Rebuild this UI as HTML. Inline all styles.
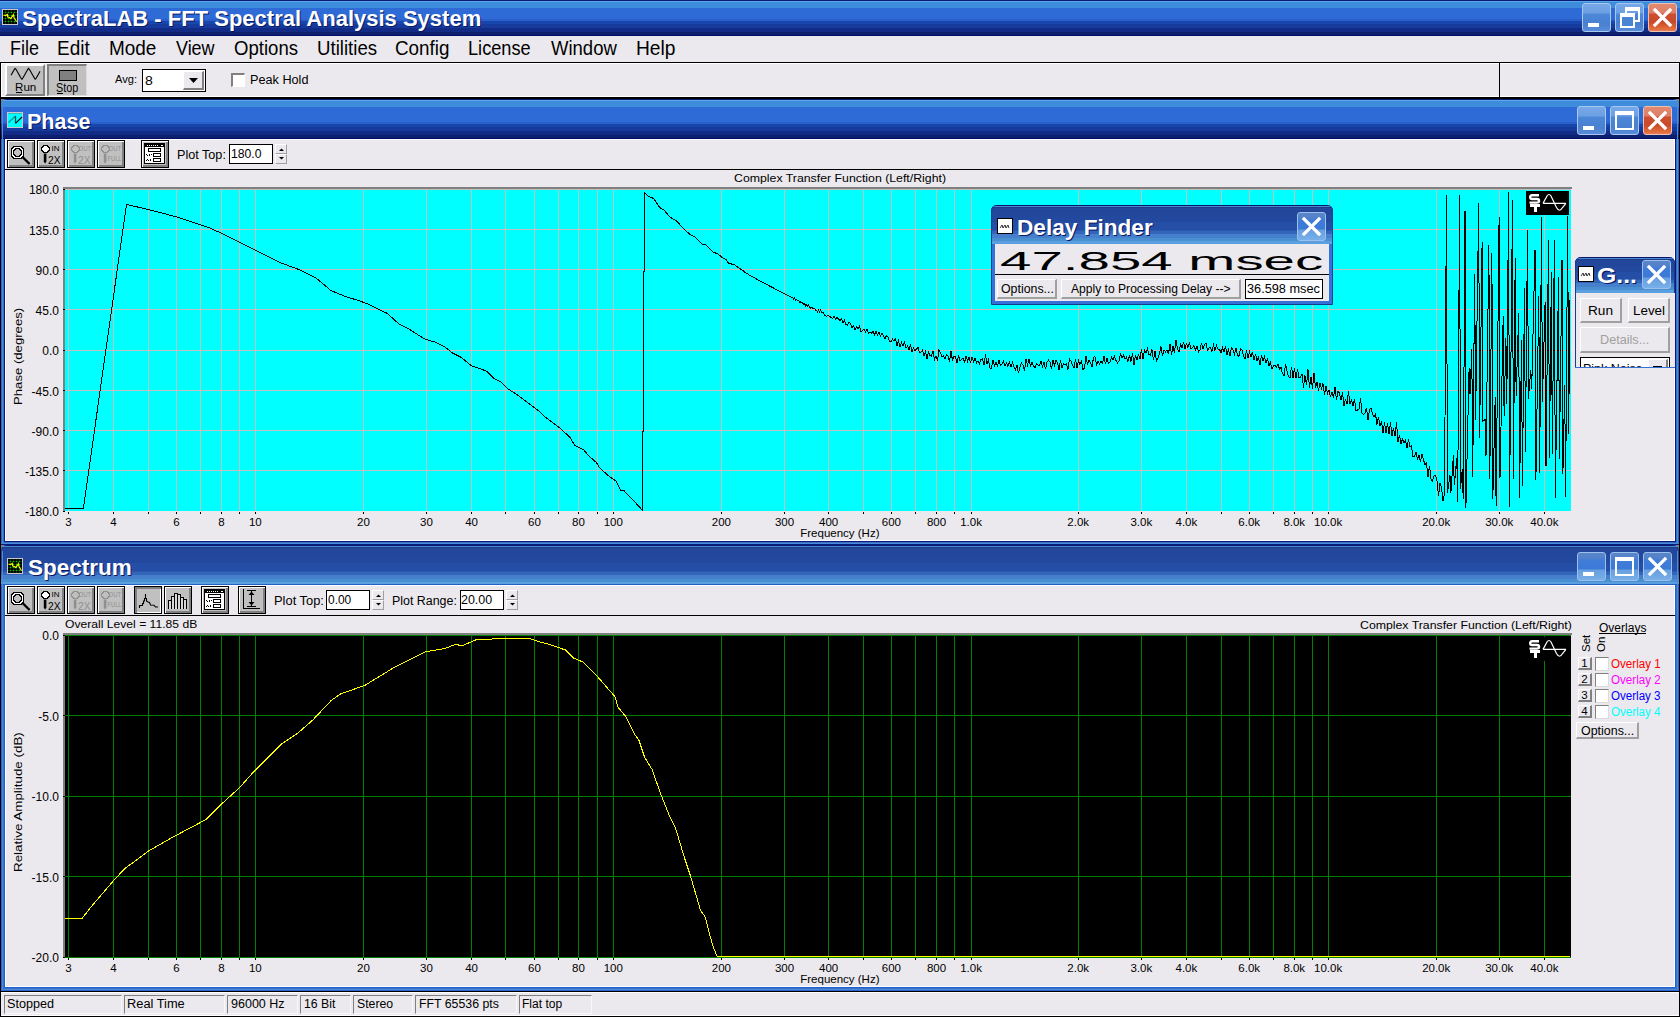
<!DOCTYPE html><html><head><meta charset="utf-8"><style>
html,body{margin:0;padding:0;}
body{width:1680px;height:1017px;position:relative;overflow:hidden;background:#808080;font-family:"Liberation Sans",sans-serif;}
.t{position:absolute;white-space:pre;line-height:normal;transform-origin:0 0;font-family:"Liberation Sans",sans-serif;}
svg{overflow:visible}
</style></head><body>
<div style="position:absolute;left:0px;top:0px;width:1680px;height:36px;background:linear-gradient(to bottom,#0A1A6E 0px,#0A1A6E 1px,#5AA6EA 1px,#5AA6EA 2px,#3E8CDC 2px,#3E8CDC 8px,#2E6BD7 8px,#2E6BD7 19px,#2A5FCC 19px,#2A5FCC 21px,#1747AC 21px,#1747AC 24px,#163B9D 24px,#163B9D 28px,#112B87 28px,#112B87 32px,#0E1F6C 32px,#0E1F6C 35px,#00106A 35px,#00106A 36px)"></div>
<svg style="position:absolute;left:2px;top:9px;" width="16" height="16" viewBox="0 0 16 16" shape-rendering="crispEdges"><rect x="0" y="0" width="16" height="16" fill="#C8C8C8"/><rect x="1" y="1" width="14" height="14" fill="#000"/><rect x="3" y="1" width="1" height="14" fill="#003800"/><rect x="1" y="3" width="14" height="1" fill="#003800"/><rect x="6" y="1" width="1" height="14" fill="#003800"/><rect x="1" y="6" width="14" height="1" fill="#003800"/><rect x="9" y="1" width="1" height="14" fill="#003800"/><rect x="1" y="9" width="14" height="1" fill="#003800"/><rect x="12" y="1" width="1" height="14" fill="#003800"/><rect x="1" y="12" width="14" height="1" fill="#003800"/><rect x="3" y="3" width="1" height="1" fill="#00C000"/><rect x="3" y="6" width="1" height="1" fill="#00C000"/><rect x="3" y="9" width="1" height="1" fill="#00C000"/><rect x="3" y="12" width="1" height="1" fill="#00C000"/><rect x="6" y="3" width="1" height="1" fill="#00C000"/><rect x="6" y="6" width="1" height="1" fill="#00C000"/><rect x="6" y="9" width="1" height="1" fill="#00C000"/><rect x="6" y="12" width="1" height="1" fill="#00C000"/><rect x="9" y="3" width="1" height="1" fill="#00C000"/><rect x="9" y="6" width="1" height="1" fill="#00C000"/><rect x="9" y="9" width="1" height="1" fill="#00C000"/><rect x="9" y="12" width="1" height="1" fill="#00C000"/><rect x="12" y="3" width="1" height="1" fill="#00C000"/><rect x="12" y="6" width="1" height="1" fill="#00C000"/><rect x="12" y="9" width="1" height="1" fill="#00C000"/><rect x="12" y="12" width="1" height="1" fill="#00C000"/><polyline points="1.5,6 3.5,6.6 5.4,5.5 5.7,8 7.5,8.5 8.7,9.6 10.5,7.2 11.3,5.6 12,8.5 14.6,12.8" fill="none" stroke="#FFFF00" stroke-width="1.1" shape-rendering="auto"/></svg>
<div class="t" style="left:22.34px;top:6.00px;font-size:22px;color:#fff;font-weight:bold;transform:scaleX(1.0000);text-shadow:1px 1px 0 #0A1860;">SpectraLAB - FFT Spectral Analysis System</div>
<div style="position:absolute;left:1582px;top:3px;width:27px;height:27px;border:1px solid #A8C8F0;border-radius:3px;background:linear-gradient(to bottom,#78A8E8 0px,#6CA0E2 9px,#4C88D8 10px,#4A80D0 20px,#5A90DC 29px)"></div>
<div style="position:absolute;left:1588px;top:23px;width:11px;height:4px;background:#fff"></div>
<div style="position:absolute;left:1615px;top:3px;width:27px;height:27px;border:1px solid #A8C8F0;border-radius:3px;background:linear-gradient(to bottom,#78A8E8 0px,#6CA0E2 9px,#4C88D8 10px,#4A80D0 20px,#5A90DC 29px)"></div>
<div style="position:absolute;left:1625px;top:7px;width:15px;height:15px;border:2px solid #fff;border-top-width:4px;box-sizing:border-box"></div>
<div style="position:absolute;left:1620px;top:13px;width:15px;height:15px;border:2px solid #fff;border-top-width:4px;box-sizing:border-box;background:#4A84D4"></div>
<div style="position:absolute;left:1648px;top:3px;width:27px;height:27px;border:1px solid #F0C0B0;border-radius:3px;background:linear-gradient(to bottom,#E08A70 0px,#DE8068 9px,#CC5030 10px,#C94A2A 18px,#E06838 24px,#E88A68 29px)"></div>
<svg style="position:absolute;left:1652px;top:7px;" width="21" height="21" viewBox="0 0 21 21" shape-rendering="crispEdges"><path d="M3,3 L18,18 M18,3 L3,18" stroke="#fff" stroke-width="3.2" stroke-linecap="square" shape-rendering="auto"/></svg>
<div style="position:absolute;left:0px;top:36px;width:1680px;height:26px;background:#EBE9ED"></div>
<div class="t" style="left:9.52px;top:37.00px;font-size:19.6px;color:#000;transform:scaleX(0.9139);">File</div>
<div class="t" style="left:57.43px;top:37.00px;font-size:19.6px;color:#000;transform:scaleX(0.9688);">Edit</div>
<div class="t" style="left:109.44px;top:37.00px;font-size:19.6px;color:#000;transform:scaleX(0.9667);">Mode</div>
<div class="t" style="left:175.91px;top:37.00px;font-size:19.6px;color:#000;transform:scaleX(0.9147);">View</div>
<div class="t" style="left:234.12px;top:37.00px;font-size:19.6px;color:#000;transform:scaleX(0.9476);">Options</div>
<div class="t" style="left:316.55px;top:37.00px;font-size:19.6px;color:#000;transform:scaleX(0.9515);">Utilities</div>
<div class="t" style="left:394.76px;top:37.00px;font-size:19.6px;color:#000;transform:scaleX(0.9607);">Config</div>
<div class="t" style="left:467.90px;top:37.00px;font-size:19.6px;color:#000;transform:scaleX(0.9282);">License</div>
<div class="t" style="left:550.61px;top:37.00px;font-size:19.6px;color:#000;transform:scaleX(0.9443);">Window</div>
<div class="t" style="left:635.82px;top:37.00px;font-size:19.6px;color:#000;transform:scaleX(0.9795);">Help</div>
<div style="position:absolute;left:0px;top:62px;width:1680px;height:37px;background:#EBE9ED"></div>
<div style="position:absolute;left:0px;top:62px;width:1680px;height:1px;background:#000"></div>
<div style="position:absolute;left:0px;top:63px;width:1680px;height:1px;background:#fff"></div>
<div style="position:absolute;left:0px;top:96px;width:1680px;height:1px;background:#fff"></div>
<div style="position:absolute;left:0px;top:97px;width:1680px;height:2px;background:#000"></div>
<div style="position:absolute;left:0px;top:62px;width:1px;height:37px;background:#000"></div>
<div style="position:absolute;left:1px;top:63px;width:1px;height:33px;background:#fff"></div>
<div style="position:absolute;left:1679px;top:62px;width:1px;height:37px;background:#000"></div>
<div style="position:absolute;left:1499px;top:62px;width:1px;height:36px;background:#000"></div>
<div style="position:absolute;left:5px;top:64px;width:40px;height:32px;background:#C0C0C0;box-sizing:border-box;border-left:2px solid #fff;border-top:2px solid #fff;border-right:2px solid #808080;border-bottom:2px solid #808080"></div>
<svg style="position:absolute;left:10px;top:67px;" width="32" height="14" viewBox="0 0 32 14" shape-rendering="crispEdges"><polyline points="1.00,8.33 1.50,7.43 2.00,6.53 2.50,5.62 3.00,4.73 3.50,3.87 4.00,3.03 4.50,2.24 5.00,1.49 5.50,1.63 6.00,2.40 6.50,3.20 7.00,4.04 7.50,4.91 8.00,5.80 8.50,6.71 9.00,7.62 9.50,8.51 10.00,9.39 10.50,10.24 11.00,11.05 11.50,11.82 12.00,12.26 12.50,11.51 13.00,10.73 13.50,9.90 14.00,9.04 14.50,8.16 15.00,7.25 15.50,6.35 16.00,5.44 16.50,4.56 17.00,3.70 17.50,2.87 18.00,2.09 18.50,1.34 19.00,1.78 19.50,2.55 20.00,3.36 20.50,4.21 21.00,5.09 21.50,5.98 22.00,6.89 22.50,7.80 23.00,8.69 23.50,9.56 24.00,10.40 24.50,11.20 25.00,11.97 25.50,12.11 26.00,11.36 26.50,10.57 27.00,9.73 27.50,8.87 28.00,7.98 28.50,7.07 29.00,6.17 29.50,5.27 30.00,4.38" fill="none" stroke="#000" stroke-width="1.1" shape-rendering="auto"/></svg>
<div class="t" style="left:14.84px;top:81.00px;font-size:11.5px;color:#000;transform:scaleX(1.0100);">Run</div>
<div style="position:absolute;left:16px;top:92px;width:6px;height:1px;background:#000"></div>
<div style="position:absolute;left:47px;top:64px;width:40px;height:32px;background:#C0C0C0;box-sizing:border-box;border-left:2px solid #808080;border-top:2px solid #808080;border-right:1px solid #DCDCDC;border-bottom:1px solid #DCDCDC"></div>
<div style="position:absolute;left:59px;top:70px;width:18px;height:11px;background:#808080;border:1px solid #000;box-sizing:border-box"></div>
<div class="t" style="left:56.21px;top:81.00px;font-size:12px;color:#000;transform:scaleX(0.9010);">Stop</div>
<div style="position:absolute;left:57px;top:93px;width:6px;height:1px;background:#000"></div>
<div class="t" style="left:115.17px;top:73.00px;font-size:11.5px;color:#000;transform:scaleX(0.9662);">Avg:</div>
<div style="position:absolute;left:142px;top:69px;width:64px;height:23px;background:#fff;border:1px solid #000;box-sizing:border-box"></div>
<div style="position:absolute;left:183px;top:71px;width:21px;height:19px;background:#EBE9ED;box-sizing:border-box;border-left:1px solid #fff;border-top:1px solid #fff;border-right:2px solid #808080;border-bottom:2px solid #808080"></div>
<svg style="position:absolute;left:189px;top:78px;" width="10" height="6" viewBox="0 0 10 6" shape-rendering="crispEdges"><path d="M0,0 H9 L4.5,5 Z" fill="#000" shape-rendering="auto"/></svg>
<div class="t" style="left:145.40px;top:74.00px;font-size:12px;color:#000;transform:scaleX(1.1702);">8</div>
<div style="position:absolute;left:231px;top:73px;width:14px;height:14px;background:#fff;box-sizing:border-box;border-left:2px solid #808080;border-top:2px solid #808080;border-right:1px solid #fff;border-bottom:1px solid #fff"></div>
<div class="t" style="left:250.35px;top:73.00px;font-size:12px;color:#000;transform:scaleX(1.0558);">Peak Hold</div>
<div style="position:absolute;left:0px;top:991px;width:1680px;height:26px;background:#EBE9ED"></div>
<div style="position:absolute;left:0px;top:991px;width:1680px;height:1px;background:#000"></div>
<div style="position:absolute;left:0px;top:992px;width:1680px;height:1px;background:#fff"></div>
<div style="position:absolute;left:0px;top:1015px;width:1680px;height:1px;background:#fff"></div>
<div style="position:absolute;left:0px;top:1016px;width:1680px;height:1px;background:#000"></div>
<div style="position:absolute;left:0px;top:991px;width:1px;height:26px;background:#000"></div>
<div style="position:absolute;left:1679px;top:991px;width:1px;height:26px;background:#000"></div>
<div style="position:absolute;left:4px;top:995px;width:118px;height:19px;box-sizing:border-box;border-left:1px solid #808080;border-top:1px solid #808080;border-right:1px solid #F8F8F8;border-bottom:1px solid #F8F8F8"></div>
<div class="t" style="left:7.43px;top:997.00px;font-size:12.5px;color:#000;transform:scaleX(1.0084);">Stopped</div>
<div style="position:absolute;left:124px;top:995px;width:101px;height:19px;box-sizing:border-box;border-left:1px solid #808080;border-top:1px solid #808080;border-right:1px solid #F8F8F8;border-bottom:1px solid #F8F8F8"></div>
<div class="t" style="left:127.14px;top:997.00px;font-size:12.5px;color:#000;transform:scaleX(1.0258);">Real Time</div>
<div style="position:absolute;left:227px;top:995px;width:71px;height:19px;box-sizing:border-box;border-left:1px solid #808080;border-top:1px solid #808080;border-right:1px solid #F8F8F8;border-bottom:1px solid #F8F8F8"></div>
<div class="t" style="left:230.66px;top:997.00px;font-size:12.5px;color:#000;transform:scaleX(1.0013);">96000 Hz</div>
<div style="position:absolute;left:300px;top:995px;width:51px;height:19px;box-sizing:border-box;border-left:1px solid #808080;border-top:1px solid #808080;border-right:1px solid #F8F8F8;border-bottom:1px solid #F8F8F8"></div>
<div class="t" style="left:303.88px;top:997.00px;font-size:12.5px;color:#000;transform:scaleX(0.9826);">16 Bit</div>
<div style="position:absolute;left:353px;top:995px;width:60px;height:19px;box-sizing:border-box;border-left:1px solid #808080;border-top:1px solid #808080;border-right:1px solid #F8F8F8;border-bottom:1px solid #F8F8F8"></div>
<div class="t" style="left:356.75px;top:997.00px;font-size:12.5px;color:#000;transform:scaleX(0.9818);">Stereo</div>
<div style="position:absolute;left:415px;top:995px;width:102px;height:19px;box-sizing:border-box;border-left:1px solid #808080;border-top:1px solid #808080;border-right:1px solid #F8F8F8;border-bottom:1px solid #F8F8F8"></div>
<div class="t" style="left:419.08px;top:997.00px;font-size:12.5px;color:#000;transform:scaleX(0.9850);">FFT 65536 pts</div>
<div style="position:absolute;left:519px;top:995px;width:73px;height:19px;box-sizing:border-box;border-left:1px solid #808080;border-top:1px solid #808080;border-right:1px solid #F8F8F8;border-bottom:1px solid #F8F8F8"></div>
<div class="t" style="left:522.41px;top:997.00px;font-size:12.5px;color:#000;transform:scaleX(0.9637);">Flat top</div>
<div style="position:absolute;left:0px;top:99px;width:1680px;height:446px;background:#3671DA;border-radius:7px 7px 0 0"></div>
<div style="position:absolute;left:0;top:99px;width:1680px;height:40px;background:linear-gradient(to bottom,#0A1A6E 0px,#0A1A6E 1px,#5AA6EA 1px,#5AA6EA 2px,#3E8CDC 2px,#3E8CDC 8px,#2E6BD7 8px,#2E6BD7 23px,#2A5FCC 23px,#2A5FCC 25px,#1747AC 25px,#1747AC 28px,#163B9D 28px,#163B9D 32px,#112B87 32px,#112B87 36px,#0E1F6C 36px,#0E1F6C 39px,#00106A 39px,#00106A 40px);border-radius:7px 7px 0 0"></div>
<div style="position:absolute;left:2px;top:105px;width:1px;height:34px;background:#4A8AE0"></div>
<div style="position:absolute;left:1677px;top:105px;width:1px;height:34px;background:#4A8AE0"></div>
<div style="position:absolute;left:4px;top:139px;width:1px;height:406px;background:#0A1A78"></div>
<div style="position:absolute;left:1675px;top:139px;width:1px;height:406px;background:#0A1A78"></div>
<div style="position:absolute;left:4px;top:541px;width:1672px;height:1px;background:#0A1A78"></div>
<div style="position:absolute;left:3px;top:139px;width:1px;height:405px;background:#3A70C8"></div>
<div style="position:absolute;left:1676px;top:139px;width:1px;height:405px;background:#3A70C8"></div>
<div style="position:absolute;left:3px;top:542px;width:1674px;height:1px;background:#3A70C8"></div>
<div style="position:absolute;left:2px;top:139px;width:1px;height:404px;background:#4A88DA"></div>
<div style="position:absolute;left:1677px;top:139px;width:1px;height:404px;background:#4A88DA"></div>
<div style="position:absolute;left:2px;top:543px;width:1676px;height:1px;background:#4A88DA"></div>
<div style="position:absolute;left:1px;top:139px;width:1px;height:403px;background:#2A62D0"></div>
<div style="position:absolute;left:1678px;top:139px;width:1px;height:403px;background:#2A62D0"></div>
<div style="position:absolute;left:1px;top:544px;width:1678px;height:1px;background:#0A2080"></div>
<div style="position:absolute;left:0px;top:99px;width:1px;height:446px;background:#000"></div>
<div style="position:absolute;left:1679px;top:99px;width:1px;height:446px;background:#000"></div>
<svg style="position:absolute;left:7px;top:112px;" width="16" height="16" viewBox="0 0 16 16" shape-rendering="crispEdges"><rect x="0" y="0" width="16" height="16" fill="#C8C8C8"/><rect x="1" y="1" width="14" height="14" fill="#00FFFF"/><rect x="1" y="1" width="14" height="1" fill="#30C0C0"/><path d="M1.5,10.5 L8.5,4" stroke="#009090" stroke-width="1.1" fill="none" shape-rendering="auto"/><path d="M8.5,4 V11.3" stroke="#005050" stroke-width="1.3" fill="none" shape-rendering="auto"/><path d="M8.5,11.3 L15,5" stroke="#000" stroke-width="1.1" fill="none" shape-rendering="auto"/></svg>
<div class="t" style="left:26.75px;top:109.00px;font-size:22px;color:#fff;font-weight:bold;transform:scaleX(0.9794);text-shadow:1px 1px 0 #0A1860;">Phase</div>
<div style="position:absolute;left:1577px;top:106px;width:27px;height:27px;border:1px solid #A8C8F0;border-radius:3px;background:linear-gradient(to bottom,#78A8E8 0px,#6CA0E2 9px,#4C88D8 10px,#4A80D0 20px,#5A90DC 29px)"></div>
<div style="position:absolute;left:1583px;top:126px;width:11px;height:4px;background:#fff"></div>
<div style="position:absolute;left:1610px;top:106px;width:27px;height:27px;border:1px solid #A8C8F0;border-radius:3px;background:linear-gradient(to bottom,#78A8E8 0px,#6CA0E2 9px,#4C88D8 10px,#4A80D0 20px,#5A90DC 29px)"></div>
<div style="position:absolute;left:1615px;top:111px;width:19px;height:19px;border:2px solid #fff;border-top-width:4px;box-sizing:border-box"></div>
<div style="position:absolute;left:1643px;top:106px;width:27px;height:27px;border:1px solid #F0C0B0;border-radius:3px;background:linear-gradient(to bottom,#E08A70 0px,#DE8068 9px,#CC5030 10px,#C94A2A 18px,#E06838 24px,#E88A68 29px)"></div>
<svg style="position:absolute;left:1647px;top:110px;" width="21" height="21" viewBox="0 0 21 21" shape-rendering="crispEdges"><path d="M3,3 L18,18 M18,3 L3,18" stroke="#fff" stroke-width="3.2" stroke-linecap="square" shape-rendering="auto"/></svg>
<div style="position:absolute;left:5px;top:139px;width:1670px;height:402px;background:#EBE9ED"></div>
<div style="position:absolute;left:5px;top:139px;width:1670px;height:1px;background:#fff"></div>
<div style="position:absolute;left:5px;top:139px;width:1px;height:402px;background:#fff"></div>
<div style="position:absolute;left:1674px;top:139px;width:1px;height:402px;background:#fff"></div>
<div style="position:absolute;left:5px;top:540px;width:1670px;height:1px;background:#fff"></div>
<div style="position:absolute;left:5px;top:169px;width:1670px;height:1px;background:#000"></div>
<div style="position:absolute;left:7px;top:140px;width:28px;height:28px;background:#C0C0C0;box-sizing:border-box;border:1px solid #000;box-shadow:inset 1px 1px 0 #fff, inset -2px -2px 0 #808080"></div>
<svg style="position:absolute;left:7px;top:140px;" width="28" height="28" viewBox="0 0 28 28" shape-rendering="crispEdges"><path d="M7.0,6.5 H14.0 L16.5,9.0 V16.0 L14.0,18.5 H7.0 L4.5,16.0 V9.0 Z" fill="#fff" stroke="#000" stroke-width="1.2" shape-rendering="crispEdges"/><path d="M9.0,8.5 H12.0 L14.5,11.0 V14.0 L12.0,16.5 H9.0 L6.5,14.0 V11.0 Z" fill="#C0C0C0" stroke="#000" stroke-width="1.2" shape-rendering="crispEdges"/><path d="M15.5,17 L22.6,24" stroke="#000" stroke-width="2.4" shape-rendering="auto"/></svg>
<div style="position:absolute;left:37px;top:140px;width:28px;height:28px;background:#C0C0C0;box-sizing:border-box;border:1px solid #000;box-shadow:inset 1px 1px 0 #fff, inset -2px -2px 0 #808080"></div>
<svg style="position:absolute;left:37px;top:140px;" width="28" height="28" viewBox="0 0 28 28" shape-rendering="crispEdges"><path d="M7.0,5.5 H10.0 L12.5,8.0 V10.0 L10.0,12.5 H7.0 L4.5,10.0 V8.0 Z" fill="#fff" stroke="#000" stroke-width="1.2" shape-rendering="crispEdges"/><path d="M6.8,13.5 h2.6 v8 l-1.3,2.3 l-1.3,-2.3 z" fill="#000" shape-rendering="auto"/><text x="14.5" y="11" font-family="Liberation Sans" font-size="6.5" fill="#000" textLength="8" lengthAdjust="spacingAndGlyphs">IN</text><text x="11" y="23.5" font-family="Liberation Sans" font-size="10.5" fill="#000" textLength="12.5" lengthAdjust="spacingAndGlyphs">2X</text></svg>
<div style="position:absolute;left:67px;top:140px;width:28px;height:28px;background:#C0C0C0;box-sizing:border-box;border:1px solid #000;box-shadow:inset 1px 1px 0 #fff, inset -2px -2px 0 #808080"></div>
<svg style="position:absolute;left:67px;top:140px;" width="28" height="28" viewBox="0 0 28 28" shape-rendering="crispEdges"><path d="M7.0,5.5 H10.0 L12.5,8.0 V10.0 L10.0,12.5 H7.0 L4.5,10.0 V8.0 Z" fill="none" stroke="#909090" stroke-width="1.2" shape-rendering="crispEdges"/><path d="M6.8,13.5 h2.6 v8 l-1.3,2.3 l-1.3,-2.3 z" fill="#909090" shape-rendering="auto"/><text x="11.6" y="11" font-family="Liberation Sans" font-size="6.5" fill="#909090" textLength="12.5" lengthAdjust="spacingAndGlyphs">OUT</text><text x="11" y="23.5" font-family="Liberation Sans" font-size="10.5" fill="#909090" textLength="12.5" lengthAdjust="spacingAndGlyphs">2X</text></svg>
<div style="position:absolute;left:97px;top:140px;width:28px;height:28px;background:#C0C0C0;box-sizing:border-box;border:1px solid #000;box-shadow:inset 1px 1px 0 #fff, inset -2px -2px 0 #808080"></div>
<svg style="position:absolute;left:97px;top:140px;" width="28" height="28" viewBox="0 0 28 28" shape-rendering="crispEdges"><path d="M7.0,5.5 H10.0 L12.5,8.0 V10.0 L10.0,12.5 H7.0 L4.5,10.0 V8.0 Z" fill="none" stroke="#909090" stroke-width="1.2" shape-rendering="crispEdges"/><path d="M6.8,13.5 h2.6 v8 l-1.3,2.3 l-1.3,-2.3 z" fill="#909090" shape-rendering="auto"/><text x="11.6" y="11" font-family="Liberation Sans" font-size="6.5" fill="#909090" textLength="12.5" lengthAdjust="spacingAndGlyphs">OUT</text><text x="10.5" y="21" font-family="Liberation Sans" font-size="6.5" fill="#909090" textLength="14" lengthAdjust="spacingAndGlyphs">FULL</text></svg>
<div style="position:absolute;left:141px;top:140px;width:28px;height:28px;background:#C0C0C0;box-sizing:border-box;border:1px solid #000;box-shadow:inset 1px 1px 0 #fff, inset -2px -2px 0 #808080"></div>
<svg style="position:absolute;left:141px;top:140px;" width="28" height="28" viewBox="0 0 28 28" shape-rendering="crispEdges"><rect x="3.5" y="3.5" width="20" height="20" fill="#fff" stroke="#000"/><rect x="4" y="4" width="19" height="3" fill="#000"/><path d="M6,5.5 H18" stroke="#fff" stroke-width="1" stroke-dasharray="1,1"/><rect x="20" y="5" width="2" height="1" fill="#fff"/><rect x="7.5" y="8.5" width="12" height="3" fill="none" stroke="#000"/><rect x="12.5" y="13.5" width="7" height="3" fill="none" stroke="#000"/><rect x="12.5" y="18.5" width="7" height="3" fill="none" stroke="#000"/><rect x="5" y="14" width="1" height="1" fill="#000"/><rect x="6" y="15" width="1" height="1" fill="#000"/><rect x="8" y="14" width="1" height="2" fill="#000"/><rect x="10" y="14" width="1" height="1" fill="#000"/><rect x="5" y="20" width="1" height="1" fill="#000"/><rect x="6" y="19" width="1" height="1" fill="#000"/><rect x="7" y="20" width="1" height="1" fill="#000"/><rect x="9" y="19" width="1" height="2" fill="#000"/></svg>
<div class="t" style="left:177.26px;top:148.00px;font-size:12px;color:#000;transform:scaleX(1.0518);">Plot Top:</div>
<div style="position:absolute;left:229px;top:144px;width:44px;height:20px;background:#fff;border:1px solid #000;box-sizing:border-box"></div>
<div class="t" style="left:231.19px;top:147.00px;font-size:12px;color:#000;transform:scaleX(1.0146);">180.0</div>
<div style="position:absolute;left:275px;top:144px;width:12px;height:10px;background:#EBE9ED;box-sizing:border-box;border-left:1px solid #fff;border-top:1px solid #fff;border-right:1px solid #A0A0A0;border-bottom:1px solid #A0A0A0"></div>
<div style="position:absolute;left:275px;top:154px;width:12px;height:10px;background:#EBE9ED;box-sizing:border-box;border-left:1px solid #fff;border-top:1px solid #fff;border-right:1px solid #A0A0A0;border-bottom:1px solid #A0A0A0"></div>
<svg style="position:absolute;left:279px;top:148px;" width="5" height="3" viewBox="0 0 5 3" shape-rendering="crispEdges"><path d="M0,3 L2.5,0.5 L5,3 Z" fill="#000" shape-rendering="auto"/></svg>
<svg style="position:absolute;left:279px;top:157px;" width="5" height="3" viewBox="0 0 5 3" shape-rendering="crispEdges"><path d="M0,0 L2.5,2.5 L5,0 Z" fill="#000" shape-rendering="auto"/></svg>
<div style="position:absolute;left:0px;top:545px;width:1680px;height:446px;background:#3671DA;border-radius:7px 7px 0 0"></div>
<div style="position:absolute;left:0;top:545px;width:1680px;height:40px;background:linear-gradient(to bottom,#06166A 0px,#06166A 1px,#4A88D8 1px,#4A88D8 2px,#1F3A80 2px,#1F3A80 3px,#22469A 3px,#22469A 10px,#23499E 10px,#23499E 18px,#254FA6 18px,#254FA6 26px,#2A58AE 26px,#2A58AE 27px,#3366BB 27px,#3366BB 30px,#4680CC 30px,#4680CC 34px,#4A90D0 34px,#4A90D0 37px,#5AA0E0 37px,#5AA0E0 39px,#2060C8 39px,#2060C8 40px);border-radius:7px 7px 0 0"></div>
<div style="position:absolute;left:2px;top:551px;width:1px;height:34px;background:#4A8AE0"></div>
<div style="position:absolute;left:1677px;top:551px;width:1px;height:34px;background:#4A8AE0"></div>
<div style="position:absolute;left:4px;top:585px;width:1px;height:406px;background:#2060D0"></div>
<div style="position:absolute;left:1675px;top:585px;width:1px;height:406px;background:#2060D0"></div>
<div style="position:absolute;left:4px;top:987px;width:1672px;height:1px;background:#2060D0"></div>
<div style="position:absolute;left:3px;top:585px;width:1px;height:405px;background:#3A70C8"></div>
<div style="position:absolute;left:1676px;top:585px;width:1px;height:405px;background:#3A70C8"></div>
<div style="position:absolute;left:3px;top:988px;width:1674px;height:1px;background:#3A70C8"></div>
<div style="position:absolute;left:2px;top:585px;width:1px;height:404px;background:#4A88DA"></div>
<div style="position:absolute;left:1677px;top:585px;width:1px;height:404px;background:#4A88DA"></div>
<div style="position:absolute;left:2px;top:989px;width:1676px;height:1px;background:#4A88DA"></div>
<div style="position:absolute;left:1px;top:585px;width:1px;height:403px;background:#2A62D0"></div>
<div style="position:absolute;left:1678px;top:585px;width:1px;height:403px;background:#2A62D0"></div>
<div style="position:absolute;left:1px;top:990px;width:1678px;height:1px;background:#2A62D0"></div>
<div style="position:absolute;left:0px;top:545px;width:1px;height:446px;background:#000"></div>
<div style="position:absolute;left:1679px;top:545px;width:1px;height:446px;background:#000"></div>
<svg style="position:absolute;left:7px;top:558px;" width="16" height="16" viewBox="0 0 16 16" shape-rendering="crispEdges"><rect x="0" y="0" width="16" height="16" fill="#C8C8C8"/><rect x="1" y="1" width="14" height="14" fill="#000"/><rect x="3" y="1" width="1" height="14" fill="#003800"/><rect x="1" y="3" width="14" height="1" fill="#003800"/><rect x="6" y="1" width="1" height="14" fill="#003800"/><rect x="1" y="6" width="14" height="1" fill="#003800"/><rect x="9" y="1" width="1" height="14" fill="#003800"/><rect x="1" y="9" width="14" height="1" fill="#003800"/><rect x="12" y="1" width="1" height="14" fill="#003800"/><rect x="1" y="12" width="14" height="1" fill="#003800"/><rect x="3" y="3" width="1" height="1" fill="#00C000"/><rect x="3" y="6" width="1" height="1" fill="#00C000"/><rect x="3" y="9" width="1" height="1" fill="#00C000"/><rect x="3" y="12" width="1" height="1" fill="#00C000"/><rect x="6" y="3" width="1" height="1" fill="#00C000"/><rect x="6" y="6" width="1" height="1" fill="#00C000"/><rect x="6" y="9" width="1" height="1" fill="#00C000"/><rect x="6" y="12" width="1" height="1" fill="#00C000"/><rect x="9" y="3" width="1" height="1" fill="#00C000"/><rect x="9" y="6" width="1" height="1" fill="#00C000"/><rect x="9" y="9" width="1" height="1" fill="#00C000"/><rect x="9" y="12" width="1" height="1" fill="#00C000"/><rect x="12" y="3" width="1" height="1" fill="#00C000"/><rect x="12" y="6" width="1" height="1" fill="#00C000"/><rect x="12" y="9" width="1" height="1" fill="#00C000"/><rect x="12" y="12" width="1" height="1" fill="#00C000"/><polyline points="1.5,6 3.5,6.6 5.4,5.5 5.7,8 7.5,8.5 8.7,9.6 10.5,7.2 11.3,5.6 12,8.5 14.6,12.8" fill="none" stroke="#FFFF00" stroke-width="1.1" shape-rendering="auto"/></svg>
<div class="t" style="left:27.52px;top:555.00px;font-size:22px;color:#fff;font-weight:bold;transform:scaleX(1.0237);text-shadow:1px 1px 0 #0A1860;">Spectrum</div>
<div style="position:absolute;left:1577px;top:552px;width:27px;height:27px;border:1px solid #9CC0EC;border-radius:3px;background:linear-gradient(to bottom,#5A86C8 0px,#5282CC 5px,#4A7ED2 6px,#3F7CD8 8px,#3C7AD8 16px,#68A0E0 17px,#72AAE6 24px,#80B4EA 29px)"></div>
<div style="position:absolute;left:1583px;top:572px;width:11px;height:4px;background:#fff"></div>
<div style="position:absolute;left:1610px;top:552px;width:27px;height:27px;border:1px solid #9CC0EC;border-radius:3px;background:linear-gradient(to bottom,#5A86C8 0px,#5282CC 5px,#4A7ED2 6px,#3F7CD8 8px,#3C7AD8 16px,#68A0E0 17px,#72AAE6 24px,#80B4EA 29px)"></div>
<div style="position:absolute;left:1615px;top:557px;width:19px;height:19px;border:2px solid #fff;border-top-width:4px;box-sizing:border-box"></div>
<div style="position:absolute;left:1643px;top:552px;width:27px;height:27px;border:1px solid #9CC0EC;border-radius:3px;background:linear-gradient(to bottom,#5A86C8 0px,#5282CC 5px,#4A7ED2 6px,#3F7CD8 8px,#3C7AD8 16px,#68A0E0 17px,#72AAE6 24px,#80B4EA 29px)"></div>
<svg style="position:absolute;left:1647px;top:556px;" width="21" height="21" viewBox="0 0 21 21" shape-rendering="crispEdges"><path d="M3,3 L18,18 M18,3 L3,18" stroke="#fff" stroke-width="3.2" stroke-linecap="square" shape-rendering="auto"/></svg>
<div style="position:absolute;left:5px;top:585px;width:1670px;height:402px;background:#EBE9ED"></div>
<div style="position:absolute;left:5px;top:585px;width:1670px;height:1px;background:#fff"></div>
<div style="position:absolute;left:5px;top:585px;width:1px;height:402px;background:#fff"></div>
<div style="position:absolute;left:1674px;top:585px;width:1px;height:402px;background:#fff"></div>
<div style="position:absolute;left:5px;top:986px;width:1670px;height:1px;background:#fff"></div>
<div style="position:absolute;left:5px;top:615px;width:1670px;height:1px;background:#000"></div>
<div style="position:absolute;left:7px;top:586px;width:28px;height:28px;background:#C0C0C0;box-sizing:border-box;border:1px solid #000;box-shadow:inset 1px 1px 0 #fff, inset -2px -2px 0 #808080"></div>
<svg style="position:absolute;left:7px;top:586px;" width="28" height="28" viewBox="0 0 28 28" shape-rendering="crispEdges"><path d="M7.0,6.5 H14.0 L16.5,9.0 V16.0 L14.0,18.5 H7.0 L4.5,16.0 V9.0 Z" fill="#fff" stroke="#000" stroke-width="1.2" shape-rendering="crispEdges"/><path d="M9.0,8.5 H12.0 L14.5,11.0 V14.0 L12.0,16.5 H9.0 L6.5,14.0 V11.0 Z" fill="#C0C0C0" stroke="#000" stroke-width="1.2" shape-rendering="crispEdges"/><path d="M15.5,17 L22.6,24" stroke="#000" stroke-width="2.4" shape-rendering="auto"/></svg>
<div style="position:absolute;left:37px;top:586px;width:28px;height:28px;background:#C0C0C0;box-sizing:border-box;border:1px solid #000;box-shadow:inset 1px 1px 0 #fff, inset -2px -2px 0 #808080"></div>
<svg style="position:absolute;left:37px;top:586px;" width="28" height="28" viewBox="0 0 28 28" shape-rendering="crispEdges"><path d="M7.0,5.5 H10.0 L12.5,8.0 V10.0 L10.0,12.5 H7.0 L4.5,10.0 V8.0 Z" fill="#fff" stroke="#000" stroke-width="1.2" shape-rendering="crispEdges"/><path d="M6.8,13.5 h2.6 v8 l-1.3,2.3 l-1.3,-2.3 z" fill="#000" shape-rendering="auto"/><text x="14.5" y="11" font-family="Liberation Sans" font-size="6.5" fill="#000" textLength="8" lengthAdjust="spacingAndGlyphs">IN</text><text x="11" y="23.5" font-family="Liberation Sans" font-size="10.5" fill="#000" textLength="12.5" lengthAdjust="spacingAndGlyphs">2X</text></svg>
<div style="position:absolute;left:67px;top:586px;width:28px;height:28px;background:#C0C0C0;box-sizing:border-box;border:1px solid #000;box-shadow:inset 1px 1px 0 #fff, inset -2px -2px 0 #808080"></div>
<svg style="position:absolute;left:67px;top:586px;" width="28" height="28" viewBox="0 0 28 28" shape-rendering="crispEdges"><path d="M7.0,5.5 H10.0 L12.5,8.0 V10.0 L10.0,12.5 H7.0 L4.5,10.0 V8.0 Z" fill="none" stroke="#909090" stroke-width="1.2" shape-rendering="crispEdges"/><path d="M6.8,13.5 h2.6 v8 l-1.3,2.3 l-1.3,-2.3 z" fill="#909090" shape-rendering="auto"/><text x="11.6" y="11" font-family="Liberation Sans" font-size="6.5" fill="#909090" textLength="12.5" lengthAdjust="spacingAndGlyphs">OUT</text><text x="11" y="23.5" font-family="Liberation Sans" font-size="10.5" fill="#909090" textLength="12.5" lengthAdjust="spacingAndGlyphs">2X</text></svg>
<div style="position:absolute;left:97px;top:586px;width:28px;height:28px;background:#C0C0C0;box-sizing:border-box;border:1px solid #000;box-shadow:inset 1px 1px 0 #fff, inset -2px -2px 0 #808080"></div>
<svg style="position:absolute;left:97px;top:586px;" width="28" height="28" viewBox="0 0 28 28" shape-rendering="crispEdges"><path d="M7.0,5.5 H10.0 L12.5,8.0 V10.0 L10.0,12.5 H7.0 L4.5,10.0 V8.0 Z" fill="none" stroke="#909090" stroke-width="1.2" shape-rendering="crispEdges"/><path d="M6.8,13.5 h2.6 v8 l-1.3,2.3 l-1.3,-2.3 z" fill="#909090" shape-rendering="auto"/><text x="11.6" y="11" font-family="Liberation Sans" font-size="6.5" fill="#909090" textLength="12.5" lengthAdjust="spacingAndGlyphs">OUT</text><text x="10.5" y="21" font-family="Liberation Sans" font-size="6.5" fill="#909090" textLength="14" lengthAdjust="spacingAndGlyphs">FULL</text></svg>
<div style="position:absolute;left:134px;top:586px;width:28px;height:28px;background:#C0C0C0;box-sizing:border-box;border:1px solid #000;box-shadow:inset 2px 2px 0 #808080, inset -1px -1px 0 #fff"></div>
<svg style="position:absolute;left:134px;top:586px;" width="28" height="28" viewBox="0 0 28 28" shape-rendering="crispEdges"><polyline points="5.5,22 5.5,19.5 8.5,19.5 8.5,17.5 9.5,17.5 9.5,15 10.5,15 10.5,12.5 11.5,12.5 11.5,8 11.5,12.5 12.5,12.5 12.5,15 14,16 15.5,16.5 16.5,19 20,19.2 21.5,21 24,21" fill="none" stroke="#000" stroke-width="1.1" shape-rendering="auto"/></svg>
<div style="position:absolute;left:164px;top:586px;width:28px;height:28px;background:#C0C0C0;box-sizing:border-box;border:1px solid #000;box-shadow:inset 1px 1px 0 #fff, inset -2px -2px 0 #808080"></div>
<svg style="position:absolute;left:164px;top:586px;" width="28" height="28" viewBox="0 0 28 28" shape-rendering="crispEdges"><rect x="4.5" y="14.5" width="3" height="8.5" fill="#D8D8D8"/><path d="M4.5,23 V14.5 H7.5 V23" fill="none" stroke="#000" stroke-width="1.1"/><rect x="7.5" y="10.5" width="3" height="12.5" fill="#D8D8D8"/><path d="M7.5,23 V10.5 H10.5 V23" fill="none" stroke="#000" stroke-width="1.1"/><rect x="10.5" y="7.5" width="3" height="15.5" fill="#D8D8D8"/><path d="M10.5,23 V7.5 H13.5 V23" fill="none" stroke="#000" stroke-width="1.1"/><rect x="13.5" y="8.5" width="3" height="14.5" fill="#D8D8D8"/><path d="M13.5,23 V8.5 H16.5 V23" fill="none" stroke="#000" stroke-width="1.1"/><rect x="16.5" y="11.5" width="3" height="11.5" fill="#D8D8D8"/><path d="M16.5,23 V11.5 H19.5 V23" fill="none" stroke="#000" stroke-width="1.1"/><rect x="19.5" y="13.5" width="3" height="9.5" fill="#D8D8D8"/><path d="M19.5,23 V13.5 H22.5 V23" fill="none" stroke="#000" stroke-width="1.1"/></svg>
<div style="position:absolute;left:201px;top:586px;width:28px;height:28px;background:#C0C0C0;box-sizing:border-box;border:1px solid #000;box-shadow:inset 1px 1px 0 #fff, inset -2px -2px 0 #808080"></div>
<svg style="position:absolute;left:201px;top:586px;" width="28" height="28" viewBox="0 0 28 28" shape-rendering="crispEdges"><rect x="3.5" y="3.5" width="20" height="20" fill="#fff" stroke="#000"/><rect x="4" y="4" width="19" height="3" fill="#000"/><path d="M6,5.5 H18" stroke="#fff" stroke-width="1" stroke-dasharray="1,1"/><rect x="20" y="5" width="2" height="1" fill="#fff"/><rect x="7.5" y="8.5" width="12" height="3" fill="none" stroke="#000"/><rect x="12.5" y="13.5" width="7" height="3" fill="none" stroke="#000"/><rect x="12.5" y="18.5" width="7" height="3" fill="none" stroke="#000"/><rect x="5" y="14" width="1" height="1" fill="#000"/><rect x="6" y="15" width="1" height="1" fill="#000"/><rect x="8" y="14" width="1" height="2" fill="#000"/><rect x="10" y="14" width="1" height="1" fill="#000"/><rect x="5" y="20" width="1" height="1" fill="#000"/><rect x="6" y="19" width="1" height="1" fill="#000"/><rect x="7" y="20" width="1" height="1" fill="#000"/><rect x="9" y="19" width="1" height="2" fill="#000"/></svg>
<div style="position:absolute;left:238px;top:586px;width:28px;height:28px;background:#C0C0C0;box-sizing:border-box;border:1px solid #000;box-shadow:inset 1px 1px 0 #fff, inset -2px -2px 0 #808080"></div>
<svg style="position:absolute;left:238px;top:586px;" width="28" height="28" viewBox="0 0 28 28" shape-rendering="crispEdges"><path d="M5.5,3 V22.5 H22" fill="none" stroke="#000" stroke-width="1"/><rect x="9" y="4" width="9" height="1" fill="#000"/><rect x="9" y="20" width="9" height="1" fill="#000"/><rect x="13" y="5" width="1" height="15" fill="#000"/><path d="M10.5,9 L13.5,5.5 L16.5,9 Z M10.5,16 L13.5,19.5 L16.5,16 Z" fill="#000" shape-rendering="auto"/></svg>
<div class="t" style="left:273.94px;top:594.00px;font-size:12px;color:#000;transform:scaleX(1.0743);">Plot Top:</div>
<div style="position:absolute;left:326px;top:590px;width:44px;height:20px;background:#fff;border:1px solid #000;box-sizing:border-box"></div>
<div class="t" style="left:328.02px;top:593.00px;font-size:12px;color:#000;transform:scaleX(0.9951);">0.00</div>
<div style="position:absolute;left:372px;top:590px;width:12px;height:10px;background:#EBE9ED;box-sizing:border-box;border-left:1px solid #fff;border-top:1px solid #fff;border-right:1px solid #A0A0A0;border-bottom:1px solid #A0A0A0"></div>
<div style="position:absolute;left:372px;top:600px;width:12px;height:10px;background:#EBE9ED;box-sizing:border-box;border-left:1px solid #fff;border-top:1px solid #fff;border-right:1px solid #A0A0A0;border-bottom:1px solid #A0A0A0"></div>
<svg style="position:absolute;left:376px;top:594px;" width="5" height="3" viewBox="0 0 5 3" shape-rendering="crispEdges"><path d="M0,3 L2.5,0.5 L5,3 Z" fill="#000" shape-rendering="auto"/></svg>
<svg style="position:absolute;left:376px;top:603px;" width="5" height="3" viewBox="0 0 5 3" shape-rendering="crispEdges"><path d="M0,0 L2.5,2.5 L5,0 Z" fill="#000" shape-rendering="auto"/></svg>
<div class="t" style="left:392.28px;top:594.00px;font-size:12px;color:#000;transform:scaleX(1.0341);">Plot Range:</div>
<div style="position:absolute;left:460px;top:590px;width:44px;height:20px;background:#fff;border:1px solid #000;box-sizing:border-box"></div>
<div class="t" style="left:461.38px;top:593.00px;font-size:12px;color:#000;transform:scaleX(1.0386);">20.00</div>
<div style="position:absolute;left:506px;top:590px;width:12px;height:10px;background:#EBE9ED;box-sizing:border-box;border-left:1px solid #fff;border-top:1px solid #fff;border-right:1px solid #A0A0A0;border-bottom:1px solid #A0A0A0"></div>
<div style="position:absolute;left:506px;top:600px;width:12px;height:10px;background:#EBE9ED;box-sizing:border-box;border-left:1px solid #fff;border-top:1px solid #fff;border-right:1px solid #A0A0A0;border-bottom:1px solid #A0A0A0"></div>
<svg style="position:absolute;left:510px;top:594px;" width="5" height="3" viewBox="0 0 5 3" shape-rendering="crispEdges"><path d="M0,3 L2.5,0.5 L5,3 Z" fill="#000" shape-rendering="auto"/></svg>
<svg style="position:absolute;left:510px;top:603px;" width="5" height="3" viewBox="0 0 5 3" shape-rendering="crispEdges"><path d="M0,0 L2.5,2.5 L5,0 Z" fill="#000" shape-rendering="auto"/></svg>
<div style="position:absolute;left:63px;top:187px;width:1509px;height:2px;background:#808080"></div>
<div style="position:absolute;left:63px;top:187px;width:2px;height:324px;background:#808080"></div>
<div style="position:absolute;left:65px;top:189px;width:1506px;height:322px;background:#00FFFF"></div>
<svg style="position:absolute;left:65px;top:189px;" width="1506" height="322" viewBox="0 0 1506 322" shape-rendering="crispEdges"><rect x="3" y="0" width="1" height="322" fill="#C0C0C0"/><rect x="48" y="0" width="1" height="322" fill="#C0C0C0"/><rect x="83" y="0" width="1" height="322" fill="#C0C0C0"/><rect x="111" y="0" width="1" height="322" fill="#C0C0C0"/><rect x="135" y="0" width="1" height="322" fill="#C0C0C0"/><rect x="156" y="0" width="1" height="322" fill="#C0C0C0"/><rect x="174" y="0" width="1" height="322" fill="#C0C0C0"/><rect x="190" y="0" width="1" height="322" fill="#C0C0C0"/><rect x="298" y="0" width="1" height="322" fill="#C0C0C0"/><rect x="361" y="0" width="1" height="322" fill="#C0C0C0"/><rect x="406" y="0" width="1" height="322" fill="#C0C0C0"/><rect x="440" y="0" width="1" height="322" fill="#C0C0C0"/><rect x="469" y="0" width="1" height="322" fill="#C0C0C0"/><rect x="493" y="0" width="1" height="322" fill="#C0C0C0"/><rect x="513" y="0" width="1" height="322" fill="#C0C0C0"/><rect x="532" y="0" width="1" height="322" fill="#C0C0C0"/><rect x="548" y="0" width="1" height="322" fill="#C0C0C0"/><rect x="656" y="0" width="1" height="322" fill="#C0C0C0"/><rect x="719" y="0" width="1" height="322" fill="#C0C0C0"/><rect x="763" y="0" width="1" height="322" fill="#C0C0C0"/><rect x="798" y="0" width="1" height="322" fill="#C0C0C0"/><rect x="826" y="0" width="1" height="322" fill="#C0C0C0"/><rect x="850" y="0" width="1" height="322" fill="#C0C0C0"/><rect x="871" y="0" width="1" height="322" fill="#C0C0C0"/><rect x="889" y="0" width="1" height="322" fill="#C0C0C0"/><rect x="906" y="0" width="1" height="322" fill="#C0C0C0"/><rect x="1013" y="0" width="1" height="322" fill="#C0C0C0"/><rect x="1076" y="0" width="1" height="322" fill="#C0C0C0"/><rect x="1121" y="0" width="1" height="322" fill="#C0C0C0"/><rect x="1156" y="0" width="1" height="322" fill="#C0C0C0"/><rect x="1184" y="0" width="1" height="322" fill="#C0C0C0"/><rect x="1208" y="0" width="1" height="322" fill="#C0C0C0"/><rect x="1229" y="0" width="1" height="322" fill="#C0C0C0"/><rect x="1247" y="0" width="1" height="322" fill="#C0C0C0"/><rect x="1263" y="0" width="1" height="322" fill="#C0C0C0"/><rect x="1371" y="0" width="1" height="322" fill="#C0C0C0"/><rect x="1434" y="0" width="1" height="322" fill="#C0C0C0"/><rect x="1479" y="0" width="1" height="322" fill="#C0C0C0"/><rect x="0" y="0" width="1506" height="1" fill="#C0C0C0"/><rect x="0" y="40" width="1506" height="1" fill="#C0C0C0"/><rect x="0" y="80" width="1506" height="1" fill="#C0C0C0"/><rect x="0" y="120" width="1506" height="1" fill="#C0C0C0"/><rect x="0" y="161" width="1506" height="1" fill="#C0C0C0"/><rect x="0" y="201" width="1506" height="1" fill="#C0C0C0"/><rect x="0" y="241" width="1506" height="1" fill="#C0C0C0"/><rect x="0" y="281" width="1506" height="1" fill="#C0C0C0"/></svg>
<div style="position:absolute;left:63px;top:189px;width:2px;height:1px;background:#000"></div>
<div class="t" style="left:28.92px;top:183.00px;font-size:12px;color:#000;transform:scaleX(1.0000);">180.0</div>
<div style="position:absolute;left:63px;top:229px;width:2px;height:1px;background:#000"></div>
<div class="t" style="left:28.92px;top:224.00px;font-size:12px;color:#000;transform:scaleX(1.0000);">135.0</div>
<div style="position:absolute;left:63px;top:269px;width:2px;height:1px;background:#000"></div>
<div class="t" style="left:35.61px;top:264.00px;font-size:12px;color:#000;transform:scaleX(1.0000);">90.0</div>
<div style="position:absolute;left:63px;top:309px;width:2px;height:1px;background:#000"></div>
<div class="t" style="left:35.61px;top:304.00px;font-size:12px;color:#000;transform:scaleX(1.0000);">45.0</div>
<div style="position:absolute;left:63px;top:350px;width:2px;height:1px;background:#000"></div>
<div class="t" style="left:42.27px;top:344.00px;font-size:12px;color:#000;transform:scaleX(1.0000);">0.0</div>
<div style="position:absolute;left:63px;top:390px;width:2px;height:1px;background:#000"></div>
<div class="t" style="left:31.62px;top:385.00px;font-size:12px;color:#000;transform:scaleX(1.0000);">-45.0</div>
<div style="position:absolute;left:63px;top:430px;width:2px;height:1px;background:#000"></div>
<div class="t" style="left:31.62px;top:425.00px;font-size:12px;color:#000;transform:scaleX(1.0000);">-90.0</div>
<div style="position:absolute;left:63px;top:470px;width:2px;height:1px;background:#000"></div>
<div class="t" style="left:24.93px;top:465.00px;font-size:12px;color:#000;transform:scaleX(1.0000);">-135.0</div>
<div style="position:absolute;left:63px;top:511px;width:2px;height:1px;background:#000"></div>
<div class="t" style="left:24.93px;top:505.00px;font-size:12px;color:#000;transform:scaleX(1.0000);">-180.0</div>
<div style="position:absolute;left:68px;top:512px;width:1px;height:2px;background:#000"></div>
<div class="t" style="left:65.34px;top:516.00px;font-size:11.5px;color:#000;transform:scaleX(1.0000);">3</div>
<div style="position:absolute;left:113px;top:512px;width:1px;height:2px;background:#000"></div>
<div class="t" style="left:110.34px;top:516.00px;font-size:11.5px;color:#000;transform:scaleX(1.0000);">4</div>
<div style="position:absolute;left:148px;top:512px;width:1px;height:2px;background:#000"></div>
<div style="position:absolute;left:176px;top:512px;width:1px;height:2px;background:#000"></div>
<div class="t" style="left:173.27px;top:516.00px;font-size:11.5px;color:#000;transform:scaleX(1.0000);">6</div>
<div style="position:absolute;left:200px;top:512px;width:1px;height:2px;background:#000"></div>
<div style="position:absolute;left:221px;top:512px;width:1px;height:2px;background:#000"></div>
<div class="t" style="left:218.31px;top:516.00px;font-size:11.5px;color:#000;transform:scaleX(1.0000);">8</div>
<div style="position:absolute;left:239px;top:512px;width:1px;height:2px;background:#000"></div>
<div style="position:absolute;left:255px;top:512px;width:1px;height:2px;background:#000"></div>
<div class="t" style="left:248.90px;top:516.00px;font-size:11.5px;color:#000;transform:scaleX(1.0000);">10</div>
<div style="position:absolute;left:363px;top:512px;width:1px;height:2px;background:#000"></div>
<div class="t" style="left:357.05px;top:516.00px;font-size:11.5px;color:#000;transform:scaleX(1.0000);">20</div>
<div style="position:absolute;left:426px;top:512px;width:1px;height:2px;background:#000"></div>
<div class="t" style="left:420.12px;top:516.00px;font-size:11.5px;color:#000;transform:scaleX(1.0000);">30</div>
<div style="position:absolute;left:471px;top:512px;width:1px;height:2px;background:#000"></div>
<div class="t" style="left:465.20px;top:516.00px;font-size:11.5px;color:#000;transform:scaleX(1.0000);">40</div>
<div style="position:absolute;left:505px;top:512px;width:1px;height:2px;background:#000"></div>
<div style="position:absolute;left:534px;top:512px;width:1px;height:2px;background:#000"></div>
<div class="t" style="left:528.05px;top:516.00px;font-size:11.5px;color:#000;transform:scaleX(1.0000);">60</div>
<div style="position:absolute;left:558px;top:512px;width:1px;height:2px;background:#000"></div>
<div style="position:absolute;left:578px;top:512px;width:1px;height:2px;background:#000"></div>
<div class="t" style="left:572.09px;top:516.00px;font-size:11.5px;color:#000;transform:scaleX(1.0000);">80</div>
<div style="position:absolute;left:597px;top:512px;width:1px;height:2px;background:#000"></div>
<div style="position:absolute;left:613px;top:512px;width:1px;height:2px;background:#000"></div>
<div class="t" style="left:603.70px;top:516.00px;font-size:11.5px;color:#000;transform:scaleX(1.0000);">100</div>
<div style="position:absolute;left:721px;top:512px;width:1px;height:2px;background:#000"></div>
<div class="t" style="left:711.84px;top:516.00px;font-size:11.5px;color:#000;transform:scaleX(1.0000);">200</div>
<div style="position:absolute;left:784px;top:512px;width:1px;height:2px;background:#000"></div>
<div class="t" style="left:774.91px;top:516.00px;font-size:11.5px;color:#000;transform:scaleX(1.0000);">300</div>
<div style="position:absolute;left:828px;top:512px;width:1px;height:2px;background:#000"></div>
<div class="t" style="left:819.00px;top:516.00px;font-size:11.5px;color:#000;transform:scaleX(1.0000);">400</div>
<div style="position:absolute;left:863px;top:512px;width:1px;height:2px;background:#000"></div>
<div style="position:absolute;left:891px;top:512px;width:1px;height:2px;background:#000"></div>
<div class="t" style="left:881.84px;top:516.00px;font-size:11.5px;color:#000;transform:scaleX(1.0000);">600</div>
<div style="position:absolute;left:915px;top:512px;width:1px;height:2px;background:#000"></div>
<div style="position:absolute;left:936px;top:512px;width:1px;height:2px;background:#000"></div>
<div class="t" style="left:926.88px;top:516.00px;font-size:11.5px;color:#000;transform:scaleX(1.0000);">800</div>
<div style="position:absolute;left:954px;top:512px;width:1px;height:2px;background:#000"></div>
<div style="position:absolute;left:971px;top:512px;width:1px;height:2px;background:#000"></div>
<div class="t" style="left:960.20px;top:516.00px;font-size:11.5px;color:#000;transform:scaleX(1.0000);">1.0k</div>
<div style="position:absolute;left:1078px;top:512px;width:1px;height:2px;background:#000"></div>
<div class="t" style="left:1067.35px;top:516.00px;font-size:11.5px;color:#000;transform:scaleX(1.0000);">2.0k</div>
<div style="position:absolute;left:1141px;top:512px;width:1px;height:2px;background:#000"></div>
<div class="t" style="left:1130.42px;top:516.00px;font-size:11.5px;color:#000;transform:scaleX(1.0000);">3.0k</div>
<div style="position:absolute;left:1186px;top:512px;width:1px;height:2px;background:#000"></div>
<div class="t" style="left:1175.50px;top:516.00px;font-size:11.5px;color:#000;transform:scaleX(1.0000);">4.0k</div>
<div style="position:absolute;left:1221px;top:512px;width:1px;height:2px;background:#000"></div>
<div style="position:absolute;left:1249px;top:512px;width:1px;height:2px;background:#000"></div>
<div class="t" style="left:1238.35px;top:516.00px;font-size:11.5px;color:#000;transform:scaleX(1.0000);">6.0k</div>
<div style="position:absolute;left:1273px;top:512px;width:1px;height:2px;background:#000"></div>
<div style="position:absolute;left:1294px;top:512px;width:1px;height:2px;background:#000"></div>
<div class="t" style="left:1283.39px;top:516.00px;font-size:11.5px;color:#000;transform:scaleX(1.0000);">8.0k</div>
<div style="position:absolute;left:1312px;top:512px;width:1px;height:2px;background:#000"></div>
<div style="position:absolute;left:1328px;top:512px;width:1px;height:2px;background:#000"></div>
<div class="t" style="left:1314.00px;top:516.00px;font-size:11.5px;color:#000;transform:scaleX(1.0000);">10.0k</div>
<div style="position:absolute;left:1436px;top:512px;width:1px;height:2px;background:#000"></div>
<div class="t" style="left:1422.14px;top:516.00px;font-size:11.5px;color:#000;transform:scaleX(1.0000);">20.0k</div>
<div style="position:absolute;left:1499px;top:512px;width:1px;height:2px;background:#000"></div>
<div class="t" style="left:1485.21px;top:516.00px;font-size:11.5px;color:#000;transform:scaleX(1.0000);">30.0k</div>
<div style="position:absolute;left:1544px;top:512px;width:1px;height:2px;background:#000"></div>
<div class="t" style="left:1530.30px;top:516.00px;font-size:11.5px;color:#000;transform:scaleX(1.0000);">40.0k</div>
<div class="t" style="left:800.25px;top:527.00px;font-size:11.5px;color:#000;transform:scaleX(1.0000);">Frequency (Hz)</div>
<div class="t" style="left:11.99px;top:404.88px;font-size:11.5px;transform-origin:0 0;transform:rotate(-90deg) scaleX(1.1430);">Phase (degrees)</div>
<div class="t" style="left:733.68px;top:172.00px;font-size:11.5px;color:#000;transform:scaleX(1.0702);">Complex Transfer Function (Left/Right)</div>
<div style="position:absolute;left:63px;top:633px;width:1509px;height:2px;background:#808080"></div>
<div style="position:absolute;left:63px;top:633px;width:2px;height:324px;background:#808080"></div>
<div style="position:absolute;left:65px;top:635px;width:1506px;height:322px;background:#000000"></div>
<svg style="position:absolute;left:65px;top:635px;" width="1506" height="322" viewBox="0 0 1506 322" shape-rendering="crispEdges"><rect x="3" y="0" width="1" height="322" fill="#008000"/><rect x="48" y="0" width="1" height="322" fill="#008000"/><rect x="83" y="0" width="1" height="322" fill="#008000"/><rect x="111" y="0" width="1" height="322" fill="#008000"/><rect x="135" y="0" width="1" height="322" fill="#008000"/><rect x="156" y="0" width="1" height="322" fill="#008000"/><rect x="174" y="0" width="1" height="322" fill="#008000"/><rect x="190" y="0" width="1" height="322" fill="#008000"/><rect x="298" y="0" width="1" height="322" fill="#008000"/><rect x="361" y="0" width="1" height="322" fill="#008000"/><rect x="406" y="0" width="1" height="322" fill="#008000"/><rect x="440" y="0" width="1" height="322" fill="#008000"/><rect x="469" y="0" width="1" height="322" fill="#008000"/><rect x="493" y="0" width="1" height="322" fill="#008000"/><rect x="513" y="0" width="1" height="322" fill="#008000"/><rect x="532" y="0" width="1" height="322" fill="#008000"/><rect x="548" y="0" width="1" height="322" fill="#008000"/><rect x="656" y="0" width="1" height="322" fill="#008000"/><rect x="719" y="0" width="1" height="322" fill="#008000"/><rect x="763" y="0" width="1" height="322" fill="#008000"/><rect x="798" y="0" width="1" height="322" fill="#008000"/><rect x="826" y="0" width="1" height="322" fill="#008000"/><rect x="850" y="0" width="1" height="322" fill="#008000"/><rect x="871" y="0" width="1" height="322" fill="#008000"/><rect x="889" y="0" width="1" height="322" fill="#008000"/><rect x="906" y="0" width="1" height="322" fill="#008000"/><rect x="1013" y="0" width="1" height="322" fill="#008000"/><rect x="1076" y="0" width="1" height="322" fill="#008000"/><rect x="1121" y="0" width="1" height="322" fill="#008000"/><rect x="1156" y="0" width="1" height="322" fill="#008000"/><rect x="1184" y="0" width="1" height="322" fill="#008000"/><rect x="1208" y="0" width="1" height="322" fill="#008000"/><rect x="1229" y="0" width="1" height="322" fill="#008000"/><rect x="1247" y="0" width="1" height="322" fill="#008000"/><rect x="1263" y="0" width="1" height="322" fill="#008000"/><rect x="1371" y="0" width="1" height="322" fill="#008000"/><rect x="1434" y="0" width="1" height="322" fill="#008000"/><rect x="1479" y="0" width="1" height="322" fill="#008000"/><rect x="0" y="0" width="1506" height="1" fill="#008000"/><rect x="0" y="80" width="1506" height="1" fill="#008000"/><rect x="0" y="161" width="1506" height="1" fill="#008000"/><rect x="0" y="241" width="1506" height="1" fill="#008000"/></svg>
<div style="position:absolute;left:63px;top:635px;width:2px;height:1px;background:#000"></div>
<div class="t" style="left:42.27px;top:629.00px;font-size:12px;color:#000;transform:scaleX(1.0000);">0.0</div>
<div style="position:absolute;left:63px;top:715px;width:2px;height:1px;background:#000"></div>
<div class="t" style="left:38.28px;top:710.00px;font-size:12px;color:#000;transform:scaleX(1.0000);">-5.0</div>
<div style="position:absolute;left:63px;top:796px;width:2px;height:1px;background:#000"></div>
<div class="t" style="left:31.62px;top:790.00px;font-size:12px;color:#000;transform:scaleX(1.0000);">-10.0</div>
<div style="position:absolute;left:63px;top:876px;width:2px;height:1px;background:#000"></div>
<div class="t" style="left:31.62px;top:871.00px;font-size:12px;color:#000;transform:scaleX(1.0000);">-15.0</div>
<div style="position:absolute;left:63px;top:957px;width:2px;height:1px;background:#000"></div>
<div class="t" style="left:31.62px;top:951.00px;font-size:12px;color:#000;transform:scaleX(1.0000);">-20.0</div>
<div style="position:absolute;left:68px;top:958px;width:1px;height:2px;background:#000"></div>
<div class="t" style="left:65.34px;top:962.00px;font-size:11.5px;color:#000;transform:scaleX(1.0000);">3</div>
<div style="position:absolute;left:113px;top:958px;width:1px;height:2px;background:#000"></div>
<div class="t" style="left:110.34px;top:962.00px;font-size:11.5px;color:#000;transform:scaleX(1.0000);">4</div>
<div style="position:absolute;left:148px;top:958px;width:1px;height:2px;background:#000"></div>
<div style="position:absolute;left:176px;top:958px;width:1px;height:2px;background:#000"></div>
<div class="t" style="left:173.27px;top:962.00px;font-size:11.5px;color:#000;transform:scaleX(1.0000);">6</div>
<div style="position:absolute;left:200px;top:958px;width:1px;height:2px;background:#000"></div>
<div style="position:absolute;left:221px;top:958px;width:1px;height:2px;background:#000"></div>
<div class="t" style="left:218.31px;top:962.00px;font-size:11.5px;color:#000;transform:scaleX(1.0000);">8</div>
<div style="position:absolute;left:239px;top:958px;width:1px;height:2px;background:#000"></div>
<div style="position:absolute;left:255px;top:958px;width:1px;height:2px;background:#000"></div>
<div class="t" style="left:248.90px;top:962.00px;font-size:11.5px;color:#000;transform:scaleX(1.0000);">10</div>
<div style="position:absolute;left:363px;top:958px;width:1px;height:2px;background:#000"></div>
<div class="t" style="left:357.05px;top:962.00px;font-size:11.5px;color:#000;transform:scaleX(1.0000);">20</div>
<div style="position:absolute;left:426px;top:958px;width:1px;height:2px;background:#000"></div>
<div class="t" style="left:420.12px;top:962.00px;font-size:11.5px;color:#000;transform:scaleX(1.0000);">30</div>
<div style="position:absolute;left:471px;top:958px;width:1px;height:2px;background:#000"></div>
<div class="t" style="left:465.20px;top:962.00px;font-size:11.5px;color:#000;transform:scaleX(1.0000);">40</div>
<div style="position:absolute;left:505px;top:958px;width:1px;height:2px;background:#000"></div>
<div style="position:absolute;left:534px;top:958px;width:1px;height:2px;background:#000"></div>
<div class="t" style="left:528.05px;top:962.00px;font-size:11.5px;color:#000;transform:scaleX(1.0000);">60</div>
<div style="position:absolute;left:558px;top:958px;width:1px;height:2px;background:#000"></div>
<div style="position:absolute;left:578px;top:958px;width:1px;height:2px;background:#000"></div>
<div class="t" style="left:572.09px;top:962.00px;font-size:11.5px;color:#000;transform:scaleX(1.0000);">80</div>
<div style="position:absolute;left:597px;top:958px;width:1px;height:2px;background:#000"></div>
<div style="position:absolute;left:613px;top:958px;width:1px;height:2px;background:#000"></div>
<div class="t" style="left:603.70px;top:962.00px;font-size:11.5px;color:#000;transform:scaleX(1.0000);">100</div>
<div style="position:absolute;left:721px;top:958px;width:1px;height:2px;background:#000"></div>
<div class="t" style="left:711.84px;top:962.00px;font-size:11.5px;color:#000;transform:scaleX(1.0000);">200</div>
<div style="position:absolute;left:784px;top:958px;width:1px;height:2px;background:#000"></div>
<div class="t" style="left:774.91px;top:962.00px;font-size:11.5px;color:#000;transform:scaleX(1.0000);">300</div>
<div style="position:absolute;left:828px;top:958px;width:1px;height:2px;background:#000"></div>
<div class="t" style="left:819.00px;top:962.00px;font-size:11.5px;color:#000;transform:scaleX(1.0000);">400</div>
<div style="position:absolute;left:863px;top:958px;width:1px;height:2px;background:#000"></div>
<div style="position:absolute;left:891px;top:958px;width:1px;height:2px;background:#000"></div>
<div class="t" style="left:881.84px;top:962.00px;font-size:11.5px;color:#000;transform:scaleX(1.0000);">600</div>
<div style="position:absolute;left:915px;top:958px;width:1px;height:2px;background:#000"></div>
<div style="position:absolute;left:936px;top:958px;width:1px;height:2px;background:#000"></div>
<div class="t" style="left:926.88px;top:962.00px;font-size:11.5px;color:#000;transform:scaleX(1.0000);">800</div>
<div style="position:absolute;left:954px;top:958px;width:1px;height:2px;background:#000"></div>
<div style="position:absolute;left:971px;top:958px;width:1px;height:2px;background:#000"></div>
<div class="t" style="left:960.20px;top:962.00px;font-size:11.5px;color:#000;transform:scaleX(1.0000);">1.0k</div>
<div style="position:absolute;left:1078px;top:958px;width:1px;height:2px;background:#000"></div>
<div class="t" style="left:1067.35px;top:962.00px;font-size:11.5px;color:#000;transform:scaleX(1.0000);">2.0k</div>
<div style="position:absolute;left:1141px;top:958px;width:1px;height:2px;background:#000"></div>
<div class="t" style="left:1130.42px;top:962.00px;font-size:11.5px;color:#000;transform:scaleX(1.0000);">3.0k</div>
<div style="position:absolute;left:1186px;top:958px;width:1px;height:2px;background:#000"></div>
<div class="t" style="left:1175.50px;top:962.00px;font-size:11.5px;color:#000;transform:scaleX(1.0000);">4.0k</div>
<div style="position:absolute;left:1221px;top:958px;width:1px;height:2px;background:#000"></div>
<div style="position:absolute;left:1249px;top:958px;width:1px;height:2px;background:#000"></div>
<div class="t" style="left:1238.35px;top:962.00px;font-size:11.5px;color:#000;transform:scaleX(1.0000);">6.0k</div>
<div style="position:absolute;left:1273px;top:958px;width:1px;height:2px;background:#000"></div>
<div style="position:absolute;left:1294px;top:958px;width:1px;height:2px;background:#000"></div>
<div class="t" style="left:1283.39px;top:962.00px;font-size:11.5px;color:#000;transform:scaleX(1.0000);">8.0k</div>
<div style="position:absolute;left:1312px;top:958px;width:1px;height:2px;background:#000"></div>
<div style="position:absolute;left:1328px;top:958px;width:1px;height:2px;background:#000"></div>
<div class="t" style="left:1314.00px;top:962.00px;font-size:11.5px;color:#000;transform:scaleX(1.0000);">10.0k</div>
<div style="position:absolute;left:1436px;top:958px;width:1px;height:2px;background:#000"></div>
<div class="t" style="left:1422.14px;top:962.00px;font-size:11.5px;color:#000;transform:scaleX(1.0000);">20.0k</div>
<div style="position:absolute;left:1499px;top:958px;width:1px;height:2px;background:#000"></div>
<div class="t" style="left:1485.21px;top:962.00px;font-size:11.5px;color:#000;transform:scaleX(1.0000);">30.0k</div>
<div style="position:absolute;left:1544px;top:958px;width:1px;height:2px;background:#000"></div>
<div class="t" style="left:1530.30px;top:962.00px;font-size:11.5px;color:#000;transform:scaleX(1.0000);">40.0k</div>
<div class="t" style="left:800.25px;top:973.00px;font-size:11.5px;color:#000;transform:scaleX(1.0000);">Frequency (Hz)</div>
<div class="t" style="left:11.99px;top:872.40px;font-size:11.5px;transform-origin:0 0;transform:rotate(-90deg) scaleX(1.1634);">Relative Amplitude (dB)</div>
<div style="position:absolute;left:65px;top:635px;width:1506px;height:1px;background:#008000"></div>
<div style="position:absolute;left:65px;top:957px;width:1506px;height:1px;background:#008000"></div>
<div class="t" style="left:65.12px;top:618.00px;font-size:11.5px;color:#000;transform:scaleX(1.0543);">Overall Level = 11.85 dB</div>
<div class="t" style="left:1359.69px;top:619.00px;font-size:11.5px;color:#000;transform:scaleX(1.0692);">Complex Transfer Function (Left/Right)</div>
<svg style="position:absolute;left:65px;top:189px" width="1506" height="322" viewBox="0 0 1506 322"><polyline points="0.0,319.5 18.4,319.5 61.5,15.5 82.6,20.3 110.1,27.5 134.5,35.6 144.2,38.8 157.2,44.6 173.4,52.8 192.9,62.5 215.6,73.8 233.4,80.3 251.2,89.1 265.8,101.4 278.8,106.9 295.0,112.1 303.9,115.3 322.4,124.5 333.9,134.9 343.2,139.5 359.3,149.9 370.9,153.4 380.1,158.0 387.1,163.8 396.3,168.4 406.7,177.0 416.0,180.0 421.7,182.3 428.7,189.2 435.6,192.7 442.5,199.6 451.8,205.4 465.6,215.8 474.9,222.7 479.5,227.4 493.4,237.8 504.9,248.2 509.5,256.2 518.8,260.9 523.4,266.6 531.5,273.6 535.0,279.3 544.2,287.4 551.2,292.1 555.8,301.3 559.2,301.8 565.0,308.2 570.8,314.0 577.5,321.4 577.5,242.0 578.5,242.0 578.5,82.0 579.5,82.0 579.5,3.3 580.5,4.3 581.5,5.4 582.5,6.4 583.5,7.3 584.5,7.7 585.5,8.2 586.5,8.6 587.5,9.0 588.5,9.5 589.5,10.6 590.5,12.1 591.5,13.6 592.5,15.1 593.5,16.6 594.5,18.1 595.5,19.2 596.5,19.6 597.5,20.1 598.5,20.6 599.5,21.7 600.5,22.9 601.5,24.1 602.5,25.2 603.5,26.4 604.5,27.6 605.5,28.4 606.5,29.0 607.5,29.5 608.5,30.1 609.5,30.7 610.5,31.2 611.5,31.9 612.5,33.0 613.5,34.1 614.5,35.2 615.5,36.3 616.5,37.4 617.5,38.5 618.5,39.6 619.5,40.6 620.5,41.5 621.5,42.4 622.5,43.3 623.5,44.1 624.5,45.0 625.5,45.8 626.5,46.3 627.5,46.8 628.5,47.3 629.5,47.8 630.5,48.5 631.5,49.5 632.5,50.5 633.5,51.5 634.5,52.5 635.5,53.5 636.5,54.5 637.5,55.2 638.5,55.4 639.5,55.5 640.5,55.8 641.5,56.7 642.5,57.7 643.5,58.6 644.5,59.6 645.5,60.5 646.5,61.5 647.5,62.4 648.5,63.2 649.5,63.6 650.5,64.0 651.5,64.3 652.5,64.7 653.5,65.5 654.5,66.3 655.5,67.1 656.5,68.0 657.5,68.6 658.5,69.2 659.5,69.8 660.5,70.4 661.5,71.0 662.5,72.9 663.5,74.2 664.5,74.5 665.5,74.7 666.5,75.0 667.5,75.2 668.5,75.5 669.5,75.8 670.5,76.5 671.5,77.2 672.5,77.9 673.5,78.6 674.5,79.3 675.5,80.0 676.5,80.7 677.5,81.4 678.5,82.1 679.5,82.9 680.5,83.6 681.5,84.3 682.5,84.9 683.5,85.5 684.5,86.1 685.5,86.6 686.5,87.2 687.5,87.7 688.5,88.3 689.5,88.9 690.5,89.4 691.5,90.0 692.5,90.6 693.5,91.1 694.5,91.7 695.5,92.3 696.5,92.8 697.5,93.4 698.5,93.9 699.5,94.4 700.5,94.9 701.5,95.4 702.5,95.9 703.5,96.5 704.5,97.0 705.5,97.5 706.5,98.0 707.5,98.5 708.5,99.0 709.5,99.5 710.5,100.1 711.5,100.6 712.5,101.1 713.5,101.6 714.5,102.1 715.5,102.4 716.5,103.3 717.5,103.5 718.5,104.3 719.5,104.5 720.5,105.1 721.5,105.9 722.5,106.4 723.5,106.5 724.5,107.3 725.5,107.7 726.5,108.8 727.5,108.3 728.5,110.1 729.5,109.1 730.5,111.1 731.5,110.3 732.5,111.9 733.5,111.3 734.5,113.1 735.5,113.0 736.5,113.7 737.5,113.5 738.5,115.4 739.5,114.3 740.5,116.8 741.5,115.7 742.5,117.5 743.5,116.1 744.5,118.3 745.5,119.0 746.5,118.6 747.5,118.9 748.5,119.8 749.5,119.3 750.5,121.4 751.5,121.3 752.5,123.0 753.5,121.3 754.5,123.1 755.5,121.4 757.0,123.8 758.5,124.0 760.0,126.4 761.5,127.1 763.0,126.3 764.5,127.5 766.0,128.2 767.5,129.7 769.0,127.1 770.5,130.1 772.0,128.2 773.5,130.0 775.0,131.7 776.5,130.1 778.0,133.9 779.5,131.3 781.0,135.6 782.5,136.1 784.0,133.6 785.5,134.4 787.0,139.0 788.5,136.5 790.0,140.5 791.5,137.8 793.0,139.7 794.5,137.4 796.0,142.9 797.5,141.3 799.0,139.8 800.5,142.7 802.0,140.2 803.5,144.5 805.0,143.2 806.5,144.3 808.0,141.7 809.5,145.7 811.0,142.3 812.5,146.0 814.0,143.4 815.5,146.9 817.0,144.6 818.5,147.0 820.0,150.2 821.5,146.3 823.0,147.7 824.5,152.8 826.0,152.8 827.5,150.0 829.0,152.2 830.5,149.9 832.0,156.5 833.5,151.6 835.0,157.6 836.5,153.7 838.0,157.3 839.5,153.2 841.0,159.3 842.5,157.0 844.0,160.7 845.5,155.3 847.0,163.2 848.5,158.7 850.0,161.6 851.5,160.0 853.0,158.4 854.5,163.5 856.0,163.3 857.5,161.0 859.0,166.6 860.5,162.3 862.0,169.7 863.5,163.0 865.0,166.5 866.5,167.4 868.0,161.7 869.5,170.6 871.0,166.8 872.5,171.6 874.0,160.6 875.5,163.8 877.0,168.2 878.5,166.9 880.0,170.0 881.5,165.5 883.0,167.2 884.5,172.7 886.0,161.6 887.5,171.8 889.0,167.6 890.5,167.3 892.0,174.1 893.5,166.2 895.0,172.1 896.5,170.2 898.0,168.8 899.5,174.0 901.0,166.6 902.5,172.2 904.0,167.9 905.5,174.2 907.0,168.1 908.5,173.0 910.0,169.4 911.5,173.8 913.0,172.0 914.5,174.9 916.0,170.4 917.5,169.7 919.0,176.3 920.5,165.4 922.0,174.6 923.5,170.7 925.0,179.3 926.5,179.0 928.0,171.2 929.5,177.0 931.0,173.5 932.5,177.1 934.0,171.3 935.5,176.7 937.0,175.1 938.5,172.2 940.0,176.5 941.5,173.9 943.0,177.4 944.5,173.1 946.0,177.8 947.5,173.6 949.0,178.2 950.5,180.9 952.0,175.6 953.5,184.4 955.0,177.9 956.5,174.0 958.0,176.3 959.5,181.5 961.0,170.1 962.5,176.0 964.0,170.3 965.5,176.7 967.0,173.3 968.5,176.9 970.0,178.9 971.5,174.3 973.0,176.1 974.5,176.1 976.0,172.2 977.5,177.7 979.0,173.3 980.5,180.1 982.0,173.0 983.5,171.2 985.0,173.1 986.5,180.1 988.0,171.0 989.5,176.4 991.0,171.1 992.5,173.7 994.0,181.1 995.5,171.1 997.0,178.8 998.5,174.8 1000.0,176.1 1001.5,174.6 1003.0,180.4 1004.5,169.9 1006.0,172.3 1007.5,176.3 1009.0,179.2 1010.5,170.3 1012.0,178.8 1013.5,171.5 1015.0,175.4 1016.5,172.3 1018.0,180.5 1019.5,179.1 1021.0,167.2 1022.5,175.8 1024.0,170.7 1025.5,174.1 1027.0,177.7 1028.5,168.5 1030.0,167.5 1031.5,175.8 1033.0,172.3 1034.5,174.8 1036.0,172.5 1037.5,174.5 1039.0,167.5 1040.5,175.0 1042.0,168.8 1043.5,174.5 1045.0,173.1 1046.5,168.1 1048.0,170.7 1049.5,167.4 1051.0,171.6 1052.5,174.0 1054.0,171.7 1055.5,164.2 1057.0,169.3 1058.5,166.2 1060.0,170.1 1061.5,168.2 1063.0,172.4 1064.5,166.4 1066.0,172.5 1067.5,163.7 1069.0,175.8 1070.5,165.7 1072.0,171.4 1073.5,164.7 1075.0,170.2 1076.5,160.3 1078.0,170.2 1079.5,161.4 1081.0,164.3 1082.5,159.9 1084.0,165.7 1085.5,166.2 1087.0,160.5 1088.5,171.4 1090.0,161.8 1091.5,172.2 1093.0,168.8 1094.5,164.2 1096.0,157.5 1097.5,167.2 1099.0,160.9 1100.5,162.8 1102.0,161.1 1103.5,165.1 1105.0,154.7 1106.5,166.1 1108.0,157.2 1109.5,163.7 1111.0,150.8 1112.5,160.4 1114.0,162.9 1115.5,155.1 1117.0,159.0 1118.5,152.9 1120.0,159.6 1121.5,154.9 1123.0,158.4 1124.5,153.2 1126.0,160.3 1127.5,158.4 1129.0,156.7 1130.5,161.0 1132.0,156.8 1133.5,162.9 1135.0,160.7 1136.5,153.8 1138.0,160.1 1139.5,155.8 1141.0,154.2 1142.5,161.5 1144.0,159.0 1145.5,158.2 1147.0,162.4 1148.5,156.2 1150.0,161.4 1151.5,156.3 1153.0,160.1 1154.5,160.2 1156.0,164.1 1157.5,158.8 1159.0,162.8 1160.5,157.6 1162.0,165.7 1163.5,161.0 1165.0,167.1 1166.5,158.5 1168.0,160.9 1169.5,165.4 1171.0,159.2 1172.5,165.9 1174.0,167.3 1175.5,159.5 1177.0,160.6 1178.5,167.1 1180.0,170.0 1181.5,161.6 1183.0,168.7 1184.5,163.1 1186.0,168.1 1187.5,162.8 1189.0,171.4 1190.5,164.7 1192.0,171.7 1193.5,168.1 1195.0,176.1 1196.5,165.9 1198.0,172.2 1199.5,168.0 1201.0,174.0 1202.5,169.1 1204.0,176.6 1205.5,173.5 1207.0,180.2 1208.5,177.0 1210.0,176.0 1211.5,178.3 1213.0,174.7 1214.5,180.4 1216.0,178.4 1217.5,184.6 1219.0,186.8 1220.5,174.6 1222.0,182.2 1223.5,187.3 1225.0,188.9 1226.5,177.6 1228.0,188.7 1229.5,179.3 1231.0,189.2 1232.5,180.3 1234.0,188.6 1235.5,188.1 1237.0,185.0 1238.5,198.5 1240.0,186.5 1241.5,196.2 1243.0,180.4 1244.5,198.8 1246.0,187.7 1247.5,200.0 1249.0,183.8 1250.5,199.0 1252.0,192.7 1253.5,201.5 1255.0,193.7 1256.5,199.5 1258.0,194.5 1259.5,205.9 1261.0,197.2 1262.5,204.5 1264.0,200.7 1265.5,208.3 1267.0,202.9 1268.5,208.4 1270.0,198.2 1271.5,210.5 1273.0,201.8 1274.5,204.4 1276.0,211.0 1277.5,203.0 1279.0,216.9 1280.5,209.8 1282.0,215.1 1283.5,202.3 1285.0,214.9 1286.5,211.2 1288.0,216.6 1289.5,210.3 1291.0,221.6 1292.5,221.0 1294.0,220.4 1295.5,209.4 1297.0,224.0 1298.5,225.3 1300.0,224.0 1301.5,218.8 1303.0,231.4 1304.5,220.2 1306.0,219.5 1307.5,224.4 1309.0,228.1 1310.5,224.8 1312.0,235.5 1313.5,228.1 1315.0,237.3 1316.5,232.0 1318.0,243.9 1319.5,233.3 1321.0,243.8 1322.5,234.0 1324.0,244.8 1325.5,233.5 1327.0,246.6 1328.5,238.9 1330.0,247.3 1331.5,233.4 1333.0,253.3 1334.5,245.6 1336.0,255.0 1337.5,249.9 1339.0,253.7 1340.5,251.4 1342.0,258.7 1343.5,249.7 1345.0,258.2 1346.5,256.9 1348.0,268.1 1349.5,267.5 1351.0,262.8 1352.5,271.1 1354.0,266.0 1355.5,273.2 1357.0,265.0 1358.5,270.7 1360.0,275.9 1361.5,274.1 1363.0,287.9 1364.5,277.0 1366.0,290.2 1367.5,291.9 1369.0,287.1 1370.5,286.3 1372.0,291.5 1373.5,307.1 1375.0,294.5 1376.5,298.4 1378.0,312.3 1379.5,305.0 1381.5,6.0 1382.4,303.7 1385.0,286.5 1385.9,304.0 1388.4,266.2 1389.3,296.2 1391.8,268.8 1392.7,313.2 1394.6,6.0 1395.5,299.5 1397.3,279.6 1398.2,310.4 1400.0,22.0 1400.9,318.5 1404.1,179.1 1405.0,205.2 1406.8,160.3 1407.7,288.2 1409.7,85.5 1410.6,230.6 1413.7,14.0 1414.6,248.6 1417.1,53.0 1418.0,232.2 1420.1,230.6 1421.0,266.6 1423.9,56.0 1424.8,289.7 1426.9,64.0 1427.8,310.1 1430.2,208.0 1431.1,317.4 1434.1,28.0 1435.0,289.0 1438.2,126.8 1439.1,226.8 1440.9,149.1 1441.8,215.3 1443.6,3.0 1444.5,317.6 1447.5,11.0 1448.4,290.4 1450.2,69.4 1451.1,207.0 1453.7,123.6 1454.6,308.8 1456.5,151.1 1457.4,297.0 1459.5,98.8 1460.4,263.3 1462.5,41.0 1463.4,210.0 1465.8,180.6 1466.7,200.0 1470.0,61.0 1470.9,290.8 1473.8,107.1 1474.7,283.8 1476.5,28.0 1477.4,212.9 1480.1,113.0 1481.0,277.3 1483.5,51.0 1484.4,269.0 1486.4,82.6 1487.3,264.6 1489.4,51.0 1490.3,309.1 1493.5,88.5 1494.4,270.4 1497.0,71.0 1497.9,284.9 1499.7,195.8 1500.6,307.8 1502.7,27.0 1503.6,244.7 1505.0,111.0" fill="none" stroke="#000" stroke-width="1" shape-rendering="crispEdges"/></svg>
<svg style="position:absolute;left:65px;top:635px" width="1506" height="322" viewBox="0 0 1506 322"><polyline points="0.0,283.0 17.4,283.0 26.6,271.2 48.7,245.4 59.8,233.6 83.7,215.9 109.5,201.2 140.9,184.6 155.6,169.8 174.0,153.2 188.8,136.7 216.4,109.0 233.0,98.0 247.8,85.0 266.2,65.5 275.0,59.2 300.1,50.2 330.2,31.8 360.3,16.8 380.4,13.4 390.4,9.4 397.1,10.7 410.5,5.0 427.2,4.0 430.5,3.4 464.0,3.4 470.7,5.7 484.0,9.4 500.8,15.1 509.1,23.4 517.5,26.8 525.0,33.8 534.2,43.5 550.1,61.9 553.0,72.2 560.4,81.0 569.2,98.7 573.7,104.6 579.6,122.3 586.9,134.1 595.8,159.2 604.6,181.3 610.5,193.1 619.4,222.6 625.3,240.3 635.6,275.7 640.0,281.6 647.4,309.7 652.0,321.3 1505.0,321.3" fill="none" stroke="#FFFF00" stroke-width="1" shape-rendering="crispEdges"/></svg>
<svg style="position:absolute;left:1526px;top:191px;" width="43" height="24" viewBox="0 0 43 24" shape-rendering="crispEdges"><rect width="43" height="24" fill="#000"/><path d="M13,4.2 H6 Q4.2,4.2 4.2,6.2 Q4.2,8 6,8 H11.2 Q13,8 13,10 Q13,11.6 11,11.6 H3.5" fill="none" stroke="#fff" stroke-width="2.4" shape-rendering="auto"/><path d="M4,13 h10 v3 h-3.5 v5 h-3 v-5 h-3.5 z" fill="#fff"/><path d="M17,12.4 L21,5 Q23,2 25,5 L30.5,16.5 Q33.5,22 36.5,16.5 L40,12.4 M17,12.4 H40" fill="none" stroke="#fff" stroke-width="1.2" shape-rendering="auto"/></svg>
<svg style="position:absolute;left:1526px;top:637px;" width="43" height="24" viewBox="0 0 43 24" shape-rendering="crispEdges"><rect width="43" height="24" fill="#000"/><path d="M13,4.2 H6 Q4.2,4.2 4.2,6.2 Q4.2,8 6,8 H11.2 Q13,8 13,10 Q13,11.6 11,11.6 H3.5" fill="none" stroke="#fff" stroke-width="2.4" shape-rendering="auto"/><path d="M4,13 h10 v3 h-3.5 v5 h-3 v-5 h-3.5 z" fill="#fff"/><path d="M17,12.4 L21,5 Q23,2 25,5 L30.5,16.5 Q33.5,22 36.5,16.5 L40,12.4 M17,12.4 H40" fill="none" stroke="#fff" stroke-width="1.2" shape-rendering="auto"/></svg>
<div style="position:absolute;left:991px;top:205px;width:342px;height:100px;background:#3671DA;border-radius:6px 6px 0 0;box-sizing:border-box;border:1px solid #1A3A90"></div>
<div style="position:absolute;left:991px;top:205px;width:342px;height:39px;background:linear-gradient(to bottom,#06166A 0px,#06166A 1px,#4A88D8 1px,#4A88D8 2px,#1F3A80 2px,#1F3A80 3px,#22469A 3px,#22469A 10px,#23499E 10px,#23499E 17px,#254FA6 17px,#254FA6 25px,#2A58AE 25px,#2A58AE 26px,#3366BB 26px,#3366BB 29px,#4680CC 29px,#4680CC 33px,#4A90D0 33px,#4A90D0 36px,#5AA0E0 36px,#5AA0E0 38px,#5AA0E0 38px,#5AA0E0 39px);border-radius:6px 6px 0 0;box-shadow:inset 1px 0 0 #1A3A90, inset -1px 0 0 #1A3A90"></div>
<div style="position:absolute;left:995px;top:244px;width:334px;height:57px;background:#EBE9ED"></div>
<svg style="position:absolute;left:997px;top:218px;" width="16" height="16" viewBox="0 0 16 16" shape-rendering="crispEdges"><rect x="0.5" y="0.5" width="15" height="15" fill="#fff" stroke="#000"/><polyline points="3,10 5,7 6,10 8,7 9,10 11,7 12,10" fill="none" stroke="#000" stroke-width="0.8" shape-rendering="auto"/></svg>
<div class="t" style="left:1017.07px;top:215.00px;font-size:22px;color:#fff;font-weight:bold;transform:scaleX(1.0281);text-shadow:1px 1px 0 #0A1860;">Delay Finder</div>
<div style="position:absolute;left:1297px;top:212px;width:27px;height:27px;border:1px solid #9CC0EC;border-radius:3px;background:linear-gradient(to bottom,#5A86C8 0px,#5282CC 5px,#4A7ED2 6px,#3F7CD8 8px,#3C7AD8 16px,#68A0E0 17px,#72AAE6 24px,#80B4EA 29px)"></div>
<svg style="position:absolute;left:1301px;top:216px;" width="21" height="21" viewBox="0 0 21 21" shape-rendering="crispEdges"><path d="M3,3 L18,18 M18,3 L3,18" stroke="#fff" stroke-width="3.2" stroke-linecap="square" shape-rendering="auto"/></svg>
<div class="t" style="left:1000.13px;top:247.00px;font-size:25px;color:#000;transform:scaleX(2.2583);">47.854 msec</div>
<div style="position:absolute;left:995px;top:274px;width:334px;height:1px;background:#000"></div>
<div style="position:absolute;left:997px;top:279px;width:60px;height:20px;background:#EBE9ED;box-sizing:border-box;border-left:1px solid #fff;border-top:1px solid #fff;border-right:2px solid #A0A0A0;border-bottom:2px solid #A0A0A0"></div>
<div class="t" style="left:1000.71px;top:282.00px;font-size:12px;color:#000;transform:scaleX(1.0300);">Options...</div>
<div style="position:absolute;left:1061px;top:279px;width:180px;height:20px;background:#EBE9ED;box-sizing:border-box;border-left:1px solid #fff;border-top:1px solid #fff;border-right:2px solid #A0A0A0;border-bottom:2px solid #A0A0A0"></div>
<div class="t" style="left:1070.97px;top:282.00px;font-size:12px;color:#000;transform:scaleX(1.0076);">Apply to Processing Delay --&gt;</div>
<div style="position:absolute;left:1245px;top:279px;width:78px;height:20px;background:#fff;border:1px solid #000;box-sizing:border-box"></div>
<div class="t" style="left:1247.02px;top:282.00px;font-size:12px;color:#000;transform:scaleX(1.0601);">36.598 msec</div>
<div style="position:absolute;left:1575px;top:257px;width:100px;height:111px;background:#3671DA;border-radius:6px 6px 0 0;box-sizing:border-box;border:1px solid #1A3A90"></div>
<div style="position:absolute;left:1575px;top:257px;width:100px;height:36px;background:linear-gradient(to bottom,#06166A 0px,#06166A 1px,#4A88D8 1px,#4A88D8 2px,#1F3A80 2px,#1F3A80 3px,#22469A 3px,#22469A 9px,#23499E 9px,#23499E 15px,#254FA6 15px,#254FA6 22px,#2A58AE 22px,#2A58AE 23px,#3366BB 23px,#3366BB 26px,#4680CC 26px,#4680CC 30px,#4A90D0 30px,#4A90D0 33px,#5AA0E0 33px,#5AA0E0 35px,#5AA0E0 35px,#5AA0E0 36px);border-radius:6px 6px 0 0;box-shadow:inset 1px 0 0 #1A3A90, inset -1px 0 0 #1A3A90"></div>
<div style="position:absolute;left:1576px;top:293px;width:99px;height:74px;background:#EBE9ED"></div>
<svg style="position:absolute;left:1578px;top:266px;" width="16" height="16" viewBox="0 0 16 16" shape-rendering="crispEdges"><rect x="0.5" y="0.5" width="15" height="15" fill="#fff" stroke="#000"/><polyline points="3,10 5,7 6,10 8,7 9,10 11,7 12,10" fill="none" stroke="#000" stroke-width="0.8" shape-rendering="auto"/></svg>
<div class="t" style="left:1597.41px;top:263.00px;font-size:22px;color:#fff;font-weight:bold;transform:scaleX(1.1284);text-shadow:1px 1px 0 #0A1860;">G...</div>
<div style="position:absolute;left:1642px;top:260px;width:27px;height:27px;border:1px solid #9CC0EC;border-radius:3px;background:linear-gradient(to bottom,#5A86C8 0px,#5282CC 5px,#4A7ED2 6px,#3F7CD8 8px,#3C7AD8 16px,#68A0E0 17px,#72AAE6 24px,#80B4EA 29px)"></div>
<svg style="position:absolute;left:1646px;top:264px;" width="21" height="21" viewBox="0 0 21 21" shape-rendering="crispEdges"><path d="M3,3 L18,18 M18,3 L3,18" stroke="#fff" stroke-width="3.2" stroke-linecap="square" shape-rendering="auto"/></svg>
<div style="position:absolute;left:1580px;top:298px;width:42px;height:25px;background:#EBE9ED;box-sizing:border-box;border-left:1px solid #fff;border-top:1px solid #fff;border-right:2px solid #A0A0A0;border-bottom:2px solid #A0A0A0"></div>
<div class="t" style="left:1587.88px;top:304.00px;font-size:12px;color:#000;transform:scaleX(1.1358);">Run</div>
<div style="position:absolute;left:1628px;top:298px;width:42px;height:25px;background:#EBE9ED;box-sizing:border-box;border-left:1px solid #fff;border-top:1px solid #fff;border-right:2px solid #A0A0A0;border-bottom:2px solid #A0A0A0"></div>
<div class="t" style="left:1632.90px;top:304.00px;font-size:12px;color:#000;transform:scaleX(1.1161);">Level</div>
<div style="position:absolute;left:1580px;top:327px;width:90px;height:26px;background:#EBE9ED;box-sizing:border-box;border-left:1px solid #fff;border-top:1px solid #fff;border-right:2px solid #A0A0A0;border-bottom:2px solid #A0A0A0"></div>
<div class="t" style="left:1600.46px;top:333.00px;font-size:12px;color:#A0A0A0;transform:scaleX(1.0536);">Details...</div>
<div style="position:absolute;left:0;top:0;width:1680px;height:367px;overflow:hidden">
<div style="position:absolute;left:1580px;top:357px;width:90px;height:14px;background:#fff;border:1px solid #000;box-sizing:border-box"></div>
<div class="t" style="left:1582.97px;top:362.00px;font-size:12px;color:#000;transform:scaleX(1.0383);">Pink Noise</div>
<div style="position:absolute;left:1648px;top:359px;width:20px;height:12px;background:#EBE9ED;box-sizing:border-box;border-left:1px solid #fff;border-top:1px solid #fff;border-right:2px solid #808080"></div>
<div style="position:absolute;left:1653px;top:366px;width:9px;height:2px;background:#000"></div>
</div>
<div style="position:absolute;left:1575px;top:367px;width:100px;height:1px;background:#3671DA"></div>
<div class="t" style="left:1598.53px;top:621.00px;font-size:12px;color:#000;transform:scaleX(1.0011);">Overlays</div>
<div style="position:absolute;left:1599px;top:633px;width:47px;height:1px;background:#000"></div>
<div class="t" style="left:1580px;top:652px;font-size:11.5px;transform-origin:0 0;transform:rotate(-90deg)">Set</div>
<div class="t" style="left:1595px;top:652px;font-size:11.5px;transform-origin:0 0;transform:rotate(-90deg)">On</div>
<div style="position:absolute;left:1578px;top:657px;width:14px;height:13px;background:#EBE9ED;box-sizing:border-box;border-left:1px solid #fff;border-top:1px solid #fff;border-right:2px solid #808080;border-bottom:2px solid #808080"></div>
<div class="t" style="left:1581.15px;top:657.00px;font-size:11.5px;color:#000;transform:scaleX(1.0000);">1</div>
<div style="position:absolute;left:1595px;top:657px;width:14px;height:14px;background:#fff;box-sizing:border-box;border-left:1px solid #808080;border-top:1px solid #808080;border-right:1px solid #DCDCDC;border-bottom:1px solid #DCDCDC"></div>
<div class="t" style="left:1611.15px;top:657.00px;font-size:12px;color:#FF0000;transform:scaleX(0.9663);">Overlay 1</div>
<div style="position:absolute;left:1578px;top:673px;width:14px;height:13px;background:#EBE9ED;box-sizing:border-box;border-left:1px solid #fff;border-top:1px solid #fff;border-right:2px solid #808080;border-bottom:2px solid #808080"></div>
<div class="t" style="left:1581.31px;top:673.00px;font-size:11.5px;color:#000;transform:scaleX(1.0000);">2</div>
<div style="position:absolute;left:1595px;top:673px;width:14px;height:14px;background:#fff;box-sizing:border-box;border-left:1px solid #808080;border-top:1px solid #808080;border-right:1px solid #DCDCDC;border-bottom:1px solid #DCDCDC"></div>
<div class="t" style="left:1611.15px;top:673.00px;font-size:12px;color:#FF00FF;transform:scaleX(0.9669);">Overlay 2</div>
<div style="position:absolute;left:1578px;top:689px;width:14px;height:13px;background:#EBE9ED;box-sizing:border-box;border-left:1px solid #fff;border-top:1px solid #fff;border-right:2px solid #808080;border-bottom:2px solid #808080"></div>
<div class="t" style="left:1581.34px;top:689.00px;font-size:11.5px;color:#000;transform:scaleX(1.0000);">3</div>
<div style="position:absolute;left:1595px;top:689px;width:14px;height:14px;background:#fff;box-sizing:border-box;border-left:1px solid #808080;border-top:1px solid #808080;border-right:1px solid #DCDCDC;border-bottom:1px solid #DCDCDC"></div>
<div class="t" style="left:1611.15px;top:689.00px;font-size:12px;color:#0000FF;transform:scaleX(0.9652);">Overlay 3</div>
<div style="position:absolute;left:1578px;top:705px;width:14px;height:13px;background:#EBE9ED;box-sizing:border-box;border-left:1px solid #fff;border-top:1px solid #fff;border-right:2px solid #808080;border-bottom:2px solid #808080"></div>
<div class="t" style="left:1581.34px;top:705.00px;font-size:11.5px;color:#000;transform:scaleX(1.0000);">4</div>
<div style="position:absolute;left:1595px;top:705px;width:14px;height:14px;background:#fff;box-sizing:border-box;border-left:1px solid #808080;border-top:1px solid #808080;border-right:1px solid #DCDCDC;border-bottom:1px solid #DCDCDC"></div>
<div class="t" style="left:1611.15px;top:705.00px;font-size:12px;color:#00FFFF;transform:scaleX(0.9617);">Overlay 4</div>
<div style="position:absolute;left:1576px;top:722px;width:63px;height:17px;background:#EBE9ED;box-sizing:border-box;border-left:1px solid #fff;border-top:1px solid #fff;border-right:2px solid #A0A0A0;border-bottom:2px solid #A0A0A0"></div>
<div class="t" style="left:1580.91px;top:724.00px;font-size:12px;color:#000;transform:scaleX(1.0360);">Options...</div>
</body></html>
